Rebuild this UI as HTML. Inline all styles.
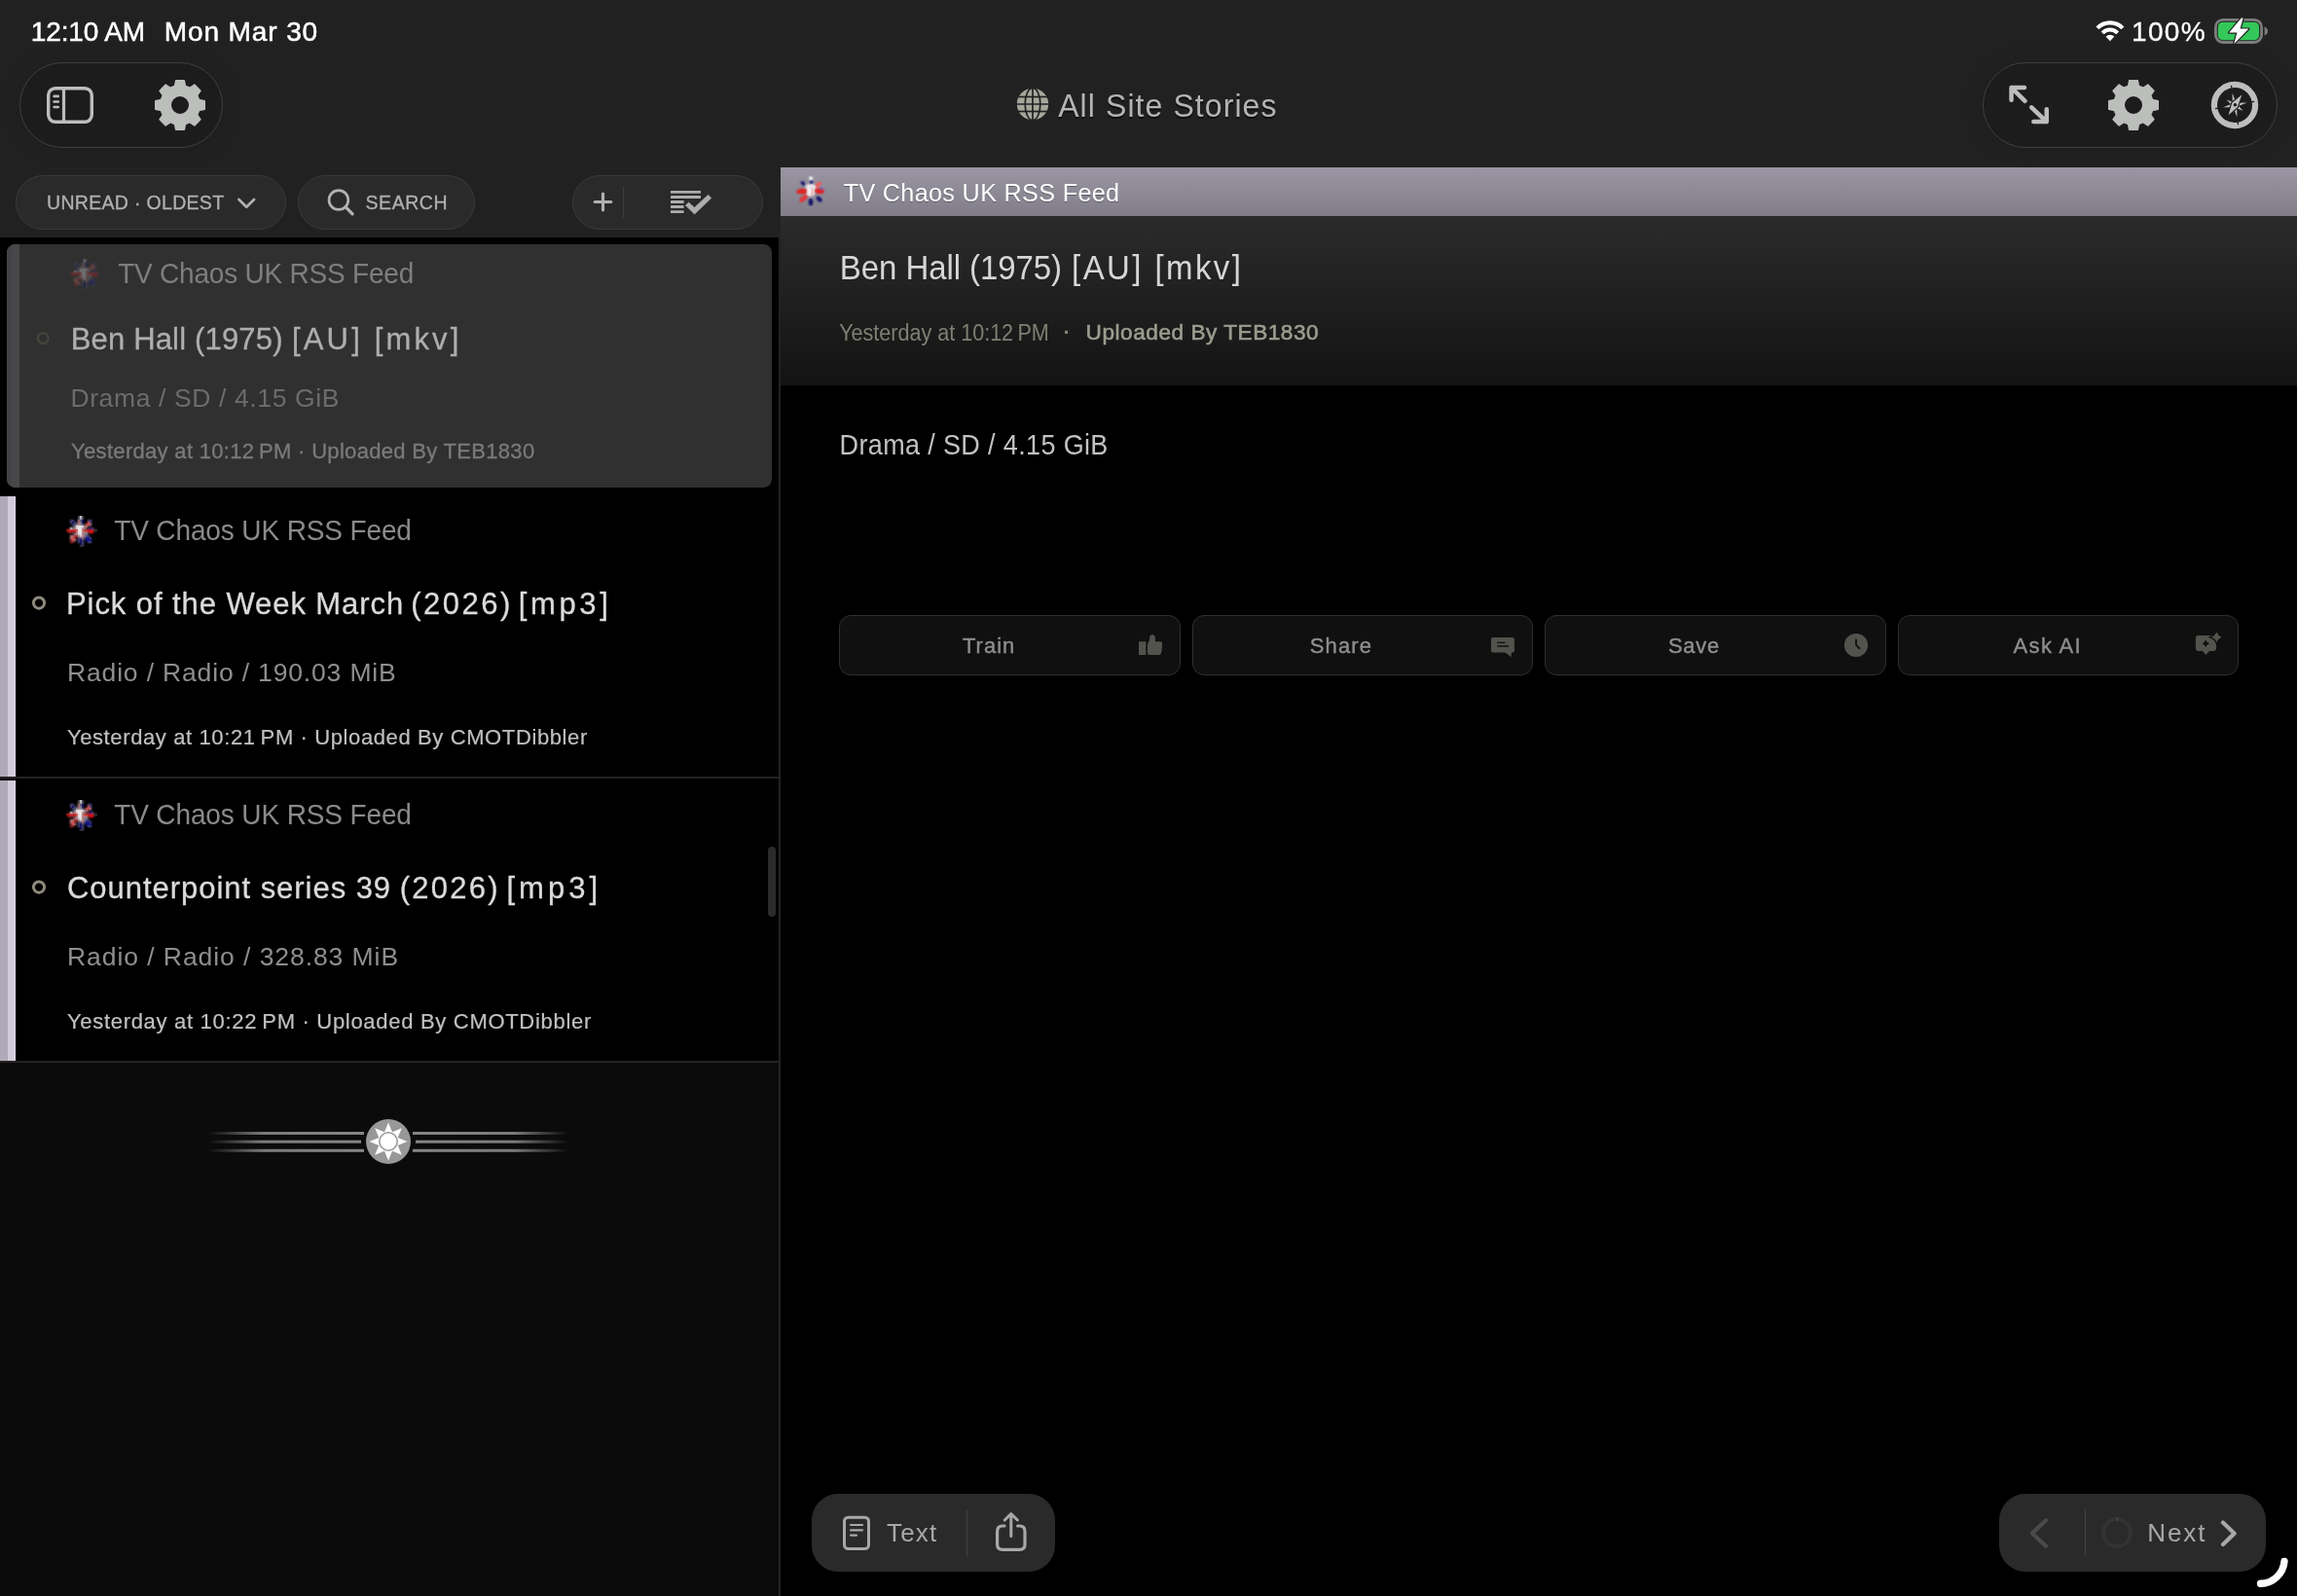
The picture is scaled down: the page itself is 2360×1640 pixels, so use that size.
<!DOCTYPE html>
<html lang="en"><head><meta charset="utf-8"><title>NewsBlur – All Site Stories</title>
<style>
*{box-sizing:border-box;margin:0;padding:0}
html,body{width:2360px;height:1640px;overflow:hidden;background:#000;font-family:"Liberation Sans",sans-serif;}
.abs,#app>div,#app>svg,#app>span,#txt>span{position:absolute}
#app{position:relative;width:2360px;height:1640px;overflow:hidden;background:#000}
#nav{left:0;top:0;width:2360px;height:172px;background:#212121}
#ltool{left:0;top:172px;width:800px;height:72px;background:#212121}
#list{left:0;top:244px;width:800px;height:847px;background:#000}
#lbot{left:0;top:1091px;width:800px;height:549px;background:#0b0b0b}
#vdiv{left:800px;top:172px;width:2px;height:1468px;background:#222222}
#feedbar{left:802px;top:172px;width:1558px;height:50px;background:linear-gradient(#9a96a3,#817e89)}
#ahead{left:802px;top:222px;width:1558px;height:174px;background:linear-gradient(#2b2b2b,#131313)}
.pill{border-radius:44px;background:#1c1c1c;border:1.5px solid #404040;box-shadow:0 0 14px 4px rgba(30,30,30,.6)}
.tpill{border-radius:28px;background:#2a2a2a;border:1.5px solid #3a3a3a}
.btn{top:632px;width:350.5px;height:62px;border-radius:12px;background:#101010;border:1.5px solid #2f2f2f}
.bpill{top:1535px;height:80px;border-radius:27px;background:#2a2a2a}
.sep{left:0;width:800px;height:2px;background:#232323}
.bar1{left:0;width:7.7px;background:#b0aab8}
.bar2{left:7.7px;width:8.4px;background:linear-gradient(90deg,#d0cad9 0,#d0cad9 86%,#dfd9e8 88%)}
</style></head><body><div id="app">
<div id="nav" role="banner" aria-label="Status and navigation bar"></div>
<div id="ltool" role="toolbar" aria-label="Story list toolbar"></div>
<div id="list" role="list" aria-label="Stories"></div>
<div id="lbot"></div>
<div id="vdiv"></div>
<div id="feedbar" role="heading" aria-label="Feed title bar"></div>
<div id="ahead" role="heading" aria-label="Story header"></div>

<!-- nav pills -->
<div class="pill" style="left:20px;top:64px;width:209px;height:88px"></div>
<div class="pill" style="left:2037px;top:64px;width:303px;height:88px"></div>


<!-- toolbar pills -->
<div class="tpill" style="left:16px;top:180px;width:278px;height:56px"></div>
<div class="tpill" style="left:306px;top:180px;width:182px;height:56px"></div>
<div class="tpill" style="left:588px;top:180px;width:196px;height:56px"></div>
<div style="left:640px;top:192px;width:1px;height:32px;background:#3d3d3d"></div>

<!-- selected card -->
<div style="left:7px;top:251px;width:786px;height:250px;border-radius:8.5px;background:#303030;overflow:hidden"><div style="position:absolute;left:0;top:0;width:12.9px;height:250px;background:linear-gradient(90deg,#434345 0,#434345 37%,#48484a 38%)"></div></div>

<!-- rows -->
<div class="bar1" style="top:510px;height:288px"></div><div class="bar2" style="top:510px;height:288px"></div>
<div class="sep" style="top:798px"></div>
<div class="bar1" style="top:802px;height:288px"></div><div class="bar2" style="top:802px;height:288px"></div>
<div class="sep" style="top:1090px"></div>
<div style="left:789px;top:870px;width:8px;height:72px;border-radius:4px;background:#2b2b2b"></div>

<!-- buttons -->
<div class="btn" role="button" aria-label="Train" style="left:862px;width:351px"></div>
<div class="btn" role="button" aria-label="Share" style="left:1225px;width:350px"></div>
<div class="btn" role="button" aria-label="Save" style="left:1587px;width:350.5px"></div>
<div class="btn" role="button" aria-label="Ask AI" style="left:1950px;width:350px"></div>

<!-- bottom pills -->
<div class="bpill" style="left:834px;width:250px"></div>
<div class="bpill" style="left:2054px;width:274px"></div>
<div style="left:993px;top:1551px;width:1px;height:48px;background:#424242"></div>
<div style="left:2142px;top:1551px;width:1px;height:48px;background:#424242"></div>

<svg style="left:46px;top:87px;" width="52" height="42" viewBox="0 0 52 42"><rect x="3.7" y="3.7" width="44.6" height="34.6" rx="7.2" fill="none" stroke="#bcbebc" stroke-width="3.4"/><line x1="19.5" y1="3.7" x2="19.5" y2="38.3" stroke="#bcbebc" stroke-width="3.2"/><g stroke="#bcbebc" stroke-width="2.6" stroke-linecap="round"><line x1="9.6" y1="11.9" x2="13.8" y2="11.9"/><line x1="9.6" y1="17.5" x2="13.8" y2="17.5"/><line x1="9.6" y1="23" x2="13.8" y2="23"/></g></svg>
<svg style="left:159px;top:82px;" width="52" height="52" viewBox="0 0 52 52"><path d="M20.60 6.54L21.70 0.80L30.30 0.80L31.40 6.54A20.2 20.2 0 0 1 35.95 8.42L40.78 5.14L46.86 11.22L43.58 16.05A20.2 20.2 0 0 1 45.46 20.60L51.20 21.70L51.20 30.30L45.46 31.40A20.2 20.2 0 0 1 43.58 35.95L46.86 40.78L40.78 46.86L35.95 43.58A20.2 20.2 0 0 1 31.40 45.46L30.30 51.20L21.70 51.20L20.60 45.46A20.2 20.2 0 0 1 16.05 43.58L11.22 46.86L5.14 40.78L8.42 35.95A20.2 20.2 0 0 1 6.54 31.40L0.80 30.30L0.80 21.70L6.54 20.60A20.2 20.2 0 0 1 8.42 16.05L5.14 11.22L11.22 5.14L16.05 8.42A20.2 20.2 0 0 1 20.60 6.54ZM35.80 26A9.8 9.8 0 1 0 16.20 26A9.8 9.8 0 1 0 35.80 26Z" fill="#bcbebc" stroke="#bcbebc" stroke-width="1.6" stroke-linejoin="round" fill-rule="evenodd"/></svg>
<svg style="left:2166px;top:82px;" width="52" height="52" viewBox="0 0 52 52"><path d="M20.60 6.54L21.70 0.80L30.30 0.80L31.40 6.54A20.2 20.2 0 0 1 35.95 8.42L40.78 5.14L46.86 11.22L43.58 16.05A20.2 20.2 0 0 1 45.46 20.60L51.20 21.70L51.20 30.30L45.46 31.40A20.2 20.2 0 0 1 43.58 35.95L46.86 40.78L40.78 46.86L35.95 43.58A20.2 20.2 0 0 1 31.40 45.46L30.30 51.20L21.70 51.20L20.60 45.46A20.2 20.2 0 0 1 16.05 43.58L11.22 46.86L5.14 40.78L8.42 35.95A20.2 20.2 0 0 1 6.54 31.40L0.80 30.30L0.80 21.70L6.54 20.60A20.2 20.2 0 0 1 8.42 16.05L5.14 11.22L11.22 5.14L16.05 8.42A20.2 20.2 0 0 1 20.60 6.54ZM35.80 26A9.8 9.8 0 1 0 16.20 26A9.8 9.8 0 1 0 35.80 26Z" fill="#bcbebc" stroke="#bcbebc" stroke-width="1.6" stroke-linejoin="round" fill-rule="evenodd"/></svg>
<svg style="left:2060px;top:84px;" width="50" height="48" viewBox="0 0 50 48"><g fill="none" stroke="#bcbebc" stroke-width="4.5" stroke-linecap="round" stroke-linejoin="round"><path d="M20.00 6.05L6.55 6.05L6.55 18.85M6.55 6.05L20.60 19.80"/><path d="M29.35 41.05L42.75 41.05L42.75 28.25M42.75 41.05L27.20 26.40"/></g></svg>
<svg style="left:2270px;top:82.4px;" width="52" height="52" viewBox="0 0 52 52"><circle cx="26" cy="26" r="21.1" fill="none" stroke="#bcbebc" stroke-width="6.2"/><line x1="22.46" y1="5.91" x2="22.98" y2="8.86" stroke="#1c1c1c" stroke-width="1.3"/><line x1="46.09" y1="22.46" x2="43.14" y2="22.98" stroke="#1c1c1c" stroke-width="1.3"/><line x1="29.54" y1="46.09" x2="29.02" y2="43.14" stroke="#1c1c1c" stroke-width="1.3"/><line x1="5.91" y1="29.54" x2="8.86" y2="29.02" stroke="#1c1c1c" stroke-width="1.3"/><path d="M23.56 13.44L28.26 25.56L23.74 26.44Z" fill="#bcbebc"/><path d="M38.66 23.54L26.44 28.26L25.56 23.74Z" fill="#bcbebc"/><path d="M34.54 31.76L24.71 27.91L27.29 24.09Z" fill="#bcbebc"/><path d="M28.39 38.27L23.74 26.44L28.26 25.56Z" fill="#bcbebc"/><path d="M14.22 28.29L25.56 23.74L26.44 28.26Z" fill="#bcbebc"/><path d="M17.71 20.41L27.29 24.09L24.71 27.91Z" fill="#bcbebc"/><path d="M34.6 13.6L29.2 28.6L18.4 37.9L22.8 23.4Z" fill="#bcbebc" stroke="#1c1c1c" stroke-width="1.2"/><circle cx="26.4" cy="25.7" r="1.8" fill="#1c1c1c"/></svg>
<svg style="left:1043px;top:89px;" width="36" height="36" viewBox="0 0 36 36"><circle cx="18" cy="18" r="16.2" fill="#a6a69b"/><g fill="none" stroke="#212121" stroke-width="1.7"><line x1="18" y1="1" x2="18" y2="35"/><line x1="1" y1="18" x2="35" y2="18"/><line x1="2" y1="10.5" x2="34" y2="10.5"/><line x1="2" y1="25.5" x2="34" y2="25.5"/><ellipse cx="18" cy="18" rx="7.8" ry="16.6"/></g></svg>
<svg style="left:240px;top:198px;" width="28" height="22" viewBox="0 0 28 22"><path d="M5.5 7L13.25 14.7L21 7" fill="none" stroke="#b2b2b2" stroke-width="2.7" stroke-linecap="round" stroke-linejoin="round"/></svg>
<svg style="left:332px;top:190px;" width="36" height="36" viewBox="0 0 36 36"><circle cx="15.9" cy="15.45" r="9.9" fill="none" stroke="#b2b2b2" stroke-width="2.7"/><line x1="23.3" y1="22.9" x2="30.1" y2="29.8" stroke="#b2b2b2" stroke-width="3.3" stroke-linecap="round"/></svg>
<svg style="left:606px;top:194px;" width="28" height="28" viewBox="0 0 28 28"><path d="M13.5 5.2V21.8M5.2 13.5H21.8" stroke="#b2b2b2" stroke-width="3.2" stroke-linecap="round" fill="none"/></svg>
<svg style="left:686px;top:193px;" width="50" height="32" viewBox="0 0 50 32"><rect x="3" y="2.90" width="31.0" height="2.90" rx="0.4" fill="#adadad"/><rect x="3" y="8.00" width="31.0" height="2.90" rx="0.4" fill="#adadad"/><rect x="3" y="13.00" width="13.6" height="2.90" rx="0.4" fill="#adadad"/><rect x="3" y="18.10" width="13.6" height="2.90" rx="0.4" fill="#adadad"/><rect x="3" y="23.20" width="13.6" height="2.90" rx="0.4" fill="#adadad"/><polygon points="18.30,18.00 21.60,15.10 27.50,20.30 41.60,7.20 44.80,10.60 27.60,27.10" fill="#adadad" stroke="#adadad" stroke-width="0.6" stroke-linejoin="round"/></svg>
<svg style="left:35px;top:339px;" width="18" height="18" viewBox="0 0 18 18"><circle cx="9.35" cy="8.7" r="5.3" fill="none" stroke="#45453f" stroke-width="2.4"/></svg>
<svg style="left:31px;top:611px;" width="18" height="18" viewBox="0 0 18 18"><circle cx="9" cy="8.6" r="5.6" fill="none" stroke="#8f8b7f" stroke-width="2.9"/></svg>
<svg style="left:31px;top:903px;" width="18" height="18" viewBox="0 0 18 18"><circle cx="9" cy="8.6" r="5.6" fill="none" stroke="#8f8b7f" stroke-width="2.9"/></svg>
<svg style="left:72px;top:265.5px;opacity:0.3" width="32" height="32" viewBox="0 0 32 32"><filter id="fb1" x="-10%" y="-10%" width="120%" height="120%"><feGaussianBlur stdDeviation="0.8"/></filter><g filter="url(#fb1)"><rect x="12" y="0" width="2.05" height="2.05" fill="#404048"/><rect x="14" y="0" width="2.05" height="2.05" fill="#ffffff"/><rect x="16" y="0" width="2.05" height="2.05" fill="#404048"/><rect x="12" y="2" width="2.05" height="2.05" fill="#404048"/><rect x="14" y="2" width="2.05" height="2.05" fill="#c8c8e0"/><rect x="16" y="2" width="2.05" height="2.05" fill="#404048"/><rect x="4" y="4" width="2.05" height="2.05" fill="#484880"/><rect x="6" y="4" width="2.05" height="2.05" fill="#484880"/><rect x="12" y="4" width="2.05" height="2.05" fill="#c08080"/><rect x="14" y="4" width="2.05" height="2.05" fill="#484880"/><rect x="16" y="4" width="2.05" height="2.05" fill="#000068"/><rect x="22" y="4" width="2.05" height="2.05" fill="#484880"/><rect x="24" y="4" width="2.05" height="2.05" fill="#484880"/><rect x="4" y="6" width="2.05" height="2.05" fill="#484880"/><rect x="6" y="6" width="2.05" height="2.05" fill="#000068"/><rect x="8" y="6" width="2.05" height="2.05" fill="#484880"/><rect x="12" y="6" width="2.05" height="2.05" fill="#c08080"/><rect x="14" y="6" width="2.05" height="2.05" fill="#888898"/><rect x="16" y="6" width="2.05" height="2.05" fill="#000068"/><rect x="22" y="6" width="2.05" height="2.05" fill="#f05858"/><rect x="24" y="6" width="2.05" height="2.05" fill="#484880"/><rect x="6" y="8" width="2.05" height="2.05" fill="#484880"/><rect x="8" y="8" width="2.05" height="2.05" fill="#484880"/><rect x="10" y="8" width="2.05" height="2.05" fill="#888898"/><rect x="12" y="8" width="2.05" height="2.05" fill="#c08080"/><rect x="14" y="8" width="2.05" height="2.05" fill="#888898"/><rect x="16" y="8" width="2.05" height="2.05" fill="#484880"/><rect x="20" y="8" width="2.05" height="2.05" fill="#f05858"/><rect x="22" y="8" width="2.05" height="2.05" fill="#f05858"/><rect x="24" y="8" width="2.05" height="2.05" fill="#c08080"/><rect x="8" y="10" width="2.05" height="2.05" fill="#888898"/><rect x="10" y="10" width="2.05" height="2.05" fill="#ffffff"/><rect x="12" y="10" width="2.05" height="2.05" fill="#ffffff"/><rect x="14" y="10" width="2.05" height="2.05" fill="#ffffff"/><rect x="16" y="10" width="2.05" height="2.05" fill="#ffffff"/><rect x="18" y="10" width="2.05" height="2.05" fill="#c08080"/><rect x="20" y="10" width="2.05" height="2.05" fill="#c08080"/><rect x="22" y="10" width="2.05" height="2.05" fill="#404048"/><rect x="4" y="12" width="2.05" height="2.05" fill="#e8e0e8"/><rect x="6" y="12" width="2.05" height="2.05" fill="#888898"/><rect x="8" y="12" width="2.05" height="2.05" fill="#c08080"/><rect x="10" y="12" width="2.05" height="2.05" fill="#e8e0e8"/><rect x="12" y="12" width="2.05" height="2.05" fill="#ffffff"/><rect x="14" y="12" width="2.05" height="2.05" fill="#ffffff"/><rect x="16" y="12" width="2.05" height="2.05" fill="#c08080"/><rect x="18" y="12" width="2.05" height="2.05" fill="#888898"/><rect x="20" y="12" width="2.05" height="2.05" fill="#404048"/><rect x="24" y="12" width="2.05" height="2.05" fill="#1010a0"/><rect x="26" y="12" width="2.05" height="2.05" fill="#484880"/><rect x="0" y="14" width="2.05" height="2.05" fill="#e81818"/><rect x="2" y="14" width="2.05" height="2.05" fill="#e81818"/><rect x="4" y="14" width="2.05" height="2.05" fill="#e81818"/><rect x="6" y="14" width="2.05" height="2.05" fill="#e81818"/><rect x="8" y="14" width="2.05" height="2.05" fill="#e81818"/><rect x="10" y="14" width="2.05" height="2.05" fill="#e81818"/><rect x="12" y="14" width="2.05" height="2.05" fill="#ffffff"/><rect x="14" y="14" width="2.05" height="2.05" fill="#ffffff"/><rect x="16" y="14" width="2.05" height="2.05" fill="#c08080"/><rect x="18" y="14" width="2.05" height="2.05" fill="#e81818"/><rect x="20" y="14" width="2.05" height="2.05" fill="#e81818"/><rect x="22" y="14" width="2.05" height="2.05" fill="#e81818"/><rect x="24" y="14" width="2.05" height="2.05" fill="#e81818"/><rect x="26" y="14" width="2.05" height="2.05" fill="#e81818"/><rect x="28" y="14" width="2.05" height="2.05" fill="#404048"/><rect x="30" y="14" width="2.05" height="2.05" fill="#404048"/><rect x="2" y="16" width="2.05" height="2.05" fill="#902828"/><rect x="4" y="16" width="2.05" height="2.05" fill="#902828"/><rect x="6" y="16" width="2.05" height="2.05" fill="#902828"/><rect x="8" y="16" width="2.05" height="2.05" fill="#902828"/><rect x="10" y="16" width="2.05" height="2.05" fill="#c08080"/><rect x="12" y="16" width="2.05" height="2.05" fill="#ffffff"/><rect x="14" y="16" width="2.05" height="2.05" fill="#ffffff"/><rect x="16" y="16" width="2.05" height="2.05" fill="#c08080"/><rect x="18" y="16" width="2.05" height="2.05" fill="#c08080"/><rect x="20" y="16" width="2.05" height="2.05" fill="#c08080"/><rect x="22" y="16" width="2.05" height="2.05" fill="#902828"/><rect x="24" y="16" width="2.05" height="2.05" fill="#e81818"/><rect x="26" y="16" width="2.05" height="2.05" fill="#e81818"/><rect x="8" y="18" width="2.05" height="2.05" fill="#888898"/><rect x="10" y="18" width="2.05" height="2.05" fill="#c08080"/><rect x="12" y="18" width="2.05" height="2.05" fill="#e8e0e8"/><rect x="14" y="18" width="2.05" height="2.05" fill="#ffffff"/><rect x="16" y="18" width="2.05" height="2.05" fill="#c08080"/><rect x="18" y="18" width="2.05" height="2.05" fill="#888898"/><rect x="20" y="18" width="2.05" height="2.05" fill="#888898"/><rect x="4" y="20" width="2.05" height="2.05" fill="#c08080"/><rect x="6" y="20" width="2.05" height="2.05" fill="#c08080"/><rect x="8" y="20" width="2.05" height="2.05" fill="#e81818"/><rect x="10" y="20" width="2.05" height="2.05" fill="#902828"/><rect x="12" y="20" width="2.05" height="2.05" fill="#c08080"/><rect x="14" y="20" width="2.05" height="2.05" fill="#e8e0e8"/><rect x="16" y="20" width="2.05" height="2.05" fill="#c08080"/><rect x="18" y="20" width="2.05" height="2.05" fill="#888898"/><rect x="20" y="20" width="2.05" height="2.05" fill="#484880"/><rect x="22" y="20" width="2.05" height="2.05" fill="#484880"/><rect x="4" y="22" width="2.05" height="2.05" fill="#c08080"/><rect x="6" y="22" width="2.05" height="2.05" fill="#f05858"/><rect x="8" y="22" width="2.05" height="2.05" fill="#902828"/><rect x="12" y="22" width="2.05" height="2.05" fill="#484880"/><rect x="14" y="22" width="2.05" height="2.05" fill="#484880"/><rect x="16" y="22" width="2.05" height="2.05" fill="#c08080"/><rect x="18" y="22" width="2.05" height="2.05" fill="#484880"/><rect x="20" y="22" width="2.05" height="2.05" fill="#1010a0"/><rect x="22" y="22" width="2.05" height="2.05" fill="#1010a0"/><rect x="24" y="22" width="2.05" height="2.05" fill="#484880"/><rect x="4" y="24" width="2.05" height="2.05" fill="#902828"/><rect x="6" y="24" width="2.05" height="2.05" fill="#f05858"/><rect x="8" y="24" width="2.05" height="2.05" fill="#c08080"/><rect x="12" y="24" width="2.05" height="2.05" fill="#484880"/><rect x="14" y="24" width="2.05" height="2.05" fill="#000068"/><rect x="16" y="24" width="2.05" height="2.05" fill="#484880"/><rect x="20" y="24" width="2.05" height="2.05" fill="#1010a0"/><rect x="22" y="24" width="2.05" height="2.05" fill="#1010a0"/><rect x="24" y="24" width="2.05" height="2.05" fill="#1010a0"/><rect x="4" y="26" width="2.05" height="2.05" fill="#902828"/><rect x="6" y="26" width="2.05" height="2.05" fill="#902828"/><rect x="12" y="26" width="2.05" height="2.05" fill="#484880"/><rect x="14" y="26" width="2.05" height="2.05" fill="#000068"/><rect x="16" y="26" width="2.05" height="2.05" fill="#484880"/><rect x="22" y="26" width="2.05" height="2.05" fill="#484880"/><rect x="24" y="26" width="2.05" height="2.05" fill="#484880"/><rect x="14" y="28" width="2.05" height="2.05" fill="#000068"/><rect x="16" y="28" width="2.05" height="2.05" fill="#484880"/><rect x="14" y="30" width="2.05" height="2.05" fill="#404048"/><rect x="16" y="30" width="2.05" height="2.05" fill="#404048"/></g><g opacity="0.45"><rect x="12" y="0" width="2.05" height="2.05" fill="#404048"/><rect x="14" y="0" width="2.05" height="2.05" fill="#ffffff"/><rect x="16" y="0" width="2.05" height="2.05" fill="#404048"/><rect x="12" y="2" width="2.05" height="2.05" fill="#404048"/><rect x="14" y="2" width="2.05" height="2.05" fill="#c8c8e0"/><rect x="16" y="2" width="2.05" height="2.05" fill="#404048"/><rect x="4" y="4" width="2.05" height="2.05" fill="#484880"/><rect x="6" y="4" width="2.05" height="2.05" fill="#484880"/><rect x="12" y="4" width="2.05" height="2.05" fill="#c08080"/><rect x="14" y="4" width="2.05" height="2.05" fill="#484880"/><rect x="16" y="4" width="2.05" height="2.05" fill="#000068"/><rect x="22" y="4" width="2.05" height="2.05" fill="#484880"/><rect x="24" y="4" width="2.05" height="2.05" fill="#484880"/><rect x="4" y="6" width="2.05" height="2.05" fill="#484880"/><rect x="6" y="6" width="2.05" height="2.05" fill="#000068"/><rect x="8" y="6" width="2.05" height="2.05" fill="#484880"/><rect x="12" y="6" width="2.05" height="2.05" fill="#c08080"/><rect x="14" y="6" width="2.05" height="2.05" fill="#888898"/><rect x="16" y="6" width="2.05" height="2.05" fill="#000068"/><rect x="22" y="6" width="2.05" height="2.05" fill="#f05858"/><rect x="24" y="6" width="2.05" height="2.05" fill="#484880"/><rect x="6" y="8" width="2.05" height="2.05" fill="#484880"/><rect x="8" y="8" width="2.05" height="2.05" fill="#484880"/><rect x="10" y="8" width="2.05" height="2.05" fill="#888898"/><rect x="12" y="8" width="2.05" height="2.05" fill="#c08080"/><rect x="14" y="8" width="2.05" height="2.05" fill="#888898"/><rect x="16" y="8" width="2.05" height="2.05" fill="#484880"/><rect x="20" y="8" width="2.05" height="2.05" fill="#f05858"/><rect x="22" y="8" width="2.05" height="2.05" fill="#f05858"/><rect x="24" y="8" width="2.05" height="2.05" fill="#c08080"/><rect x="8" y="10" width="2.05" height="2.05" fill="#888898"/><rect x="10" y="10" width="2.05" height="2.05" fill="#ffffff"/><rect x="12" y="10" width="2.05" height="2.05" fill="#ffffff"/><rect x="14" y="10" width="2.05" height="2.05" fill="#ffffff"/><rect x="16" y="10" width="2.05" height="2.05" fill="#ffffff"/><rect x="18" y="10" width="2.05" height="2.05" fill="#c08080"/><rect x="20" y="10" width="2.05" height="2.05" fill="#c08080"/><rect x="22" y="10" width="2.05" height="2.05" fill="#404048"/><rect x="4" y="12" width="2.05" height="2.05" fill="#e8e0e8"/><rect x="6" y="12" width="2.05" height="2.05" fill="#888898"/><rect x="8" y="12" width="2.05" height="2.05" fill="#c08080"/><rect x="10" y="12" width="2.05" height="2.05" fill="#e8e0e8"/><rect x="12" y="12" width="2.05" height="2.05" fill="#ffffff"/><rect x="14" y="12" width="2.05" height="2.05" fill="#ffffff"/><rect x="16" y="12" width="2.05" height="2.05" fill="#c08080"/><rect x="18" y="12" width="2.05" height="2.05" fill="#888898"/><rect x="20" y="12" width="2.05" height="2.05" fill="#404048"/><rect x="24" y="12" width="2.05" height="2.05" fill="#1010a0"/><rect x="26" y="12" width="2.05" height="2.05" fill="#484880"/><rect x="0" y="14" width="2.05" height="2.05" fill="#e81818"/><rect x="2" y="14" width="2.05" height="2.05" fill="#e81818"/><rect x="4" y="14" width="2.05" height="2.05" fill="#e81818"/><rect x="6" y="14" width="2.05" height="2.05" fill="#e81818"/><rect x="8" y="14" width="2.05" height="2.05" fill="#e81818"/><rect x="10" y="14" width="2.05" height="2.05" fill="#e81818"/><rect x="12" y="14" width="2.05" height="2.05" fill="#ffffff"/><rect x="14" y="14" width="2.05" height="2.05" fill="#ffffff"/><rect x="16" y="14" width="2.05" height="2.05" fill="#c08080"/><rect x="18" y="14" width="2.05" height="2.05" fill="#e81818"/><rect x="20" y="14" width="2.05" height="2.05" fill="#e81818"/><rect x="22" y="14" width="2.05" height="2.05" fill="#e81818"/><rect x="24" y="14" width="2.05" height="2.05" fill="#e81818"/><rect x="26" y="14" width="2.05" height="2.05" fill="#e81818"/><rect x="28" y="14" width="2.05" height="2.05" fill="#404048"/><rect x="30" y="14" width="2.05" height="2.05" fill="#404048"/><rect x="2" y="16" width="2.05" height="2.05" fill="#902828"/><rect x="4" y="16" width="2.05" height="2.05" fill="#902828"/><rect x="6" y="16" width="2.05" height="2.05" fill="#902828"/><rect x="8" y="16" width="2.05" height="2.05" fill="#902828"/><rect x="10" y="16" width="2.05" height="2.05" fill="#c08080"/><rect x="12" y="16" width="2.05" height="2.05" fill="#ffffff"/><rect x="14" y="16" width="2.05" height="2.05" fill="#ffffff"/><rect x="16" y="16" width="2.05" height="2.05" fill="#c08080"/><rect x="18" y="16" width="2.05" height="2.05" fill="#c08080"/><rect x="20" y="16" width="2.05" height="2.05" fill="#c08080"/><rect x="22" y="16" width="2.05" height="2.05" fill="#902828"/><rect x="24" y="16" width="2.05" height="2.05" fill="#e81818"/><rect x="26" y="16" width="2.05" height="2.05" fill="#e81818"/><rect x="8" y="18" width="2.05" height="2.05" fill="#888898"/><rect x="10" y="18" width="2.05" height="2.05" fill="#c08080"/><rect x="12" y="18" width="2.05" height="2.05" fill="#e8e0e8"/><rect x="14" y="18" width="2.05" height="2.05" fill="#ffffff"/><rect x="16" y="18" width="2.05" height="2.05" fill="#c08080"/><rect x="18" y="18" width="2.05" height="2.05" fill="#888898"/><rect x="20" y="18" width="2.05" height="2.05" fill="#888898"/><rect x="4" y="20" width="2.05" height="2.05" fill="#c08080"/><rect x="6" y="20" width="2.05" height="2.05" fill="#c08080"/><rect x="8" y="20" width="2.05" height="2.05" fill="#e81818"/><rect x="10" y="20" width="2.05" height="2.05" fill="#902828"/><rect x="12" y="20" width="2.05" height="2.05" fill="#c08080"/><rect x="14" y="20" width="2.05" height="2.05" fill="#e8e0e8"/><rect x="16" y="20" width="2.05" height="2.05" fill="#c08080"/><rect x="18" y="20" width="2.05" height="2.05" fill="#888898"/><rect x="20" y="20" width="2.05" height="2.05" fill="#484880"/><rect x="22" y="20" width="2.05" height="2.05" fill="#484880"/><rect x="4" y="22" width="2.05" height="2.05" fill="#c08080"/><rect x="6" y="22" width="2.05" height="2.05" fill="#f05858"/><rect x="8" y="22" width="2.05" height="2.05" fill="#902828"/><rect x="12" y="22" width="2.05" height="2.05" fill="#484880"/><rect x="14" y="22" width="2.05" height="2.05" fill="#484880"/><rect x="16" y="22" width="2.05" height="2.05" fill="#c08080"/><rect x="18" y="22" width="2.05" height="2.05" fill="#484880"/><rect x="20" y="22" width="2.05" height="2.05" fill="#1010a0"/><rect x="22" y="22" width="2.05" height="2.05" fill="#1010a0"/><rect x="24" y="22" width="2.05" height="2.05" fill="#484880"/><rect x="4" y="24" width="2.05" height="2.05" fill="#902828"/><rect x="6" y="24" width="2.05" height="2.05" fill="#f05858"/><rect x="8" y="24" width="2.05" height="2.05" fill="#c08080"/><rect x="12" y="24" width="2.05" height="2.05" fill="#484880"/><rect x="14" y="24" width="2.05" height="2.05" fill="#000068"/><rect x="16" y="24" width="2.05" height="2.05" fill="#484880"/><rect x="20" y="24" width="2.05" height="2.05" fill="#1010a0"/><rect x="22" y="24" width="2.05" height="2.05" fill="#1010a0"/><rect x="24" y="24" width="2.05" height="2.05" fill="#1010a0"/><rect x="4" y="26" width="2.05" height="2.05" fill="#902828"/><rect x="6" y="26" width="2.05" height="2.05" fill="#902828"/><rect x="12" y="26" width="2.05" height="2.05" fill="#484880"/><rect x="14" y="26" width="2.05" height="2.05" fill="#000068"/><rect x="16" y="26" width="2.05" height="2.05" fill="#484880"/><rect x="22" y="26" width="2.05" height="2.05" fill="#484880"/><rect x="24" y="26" width="2.05" height="2.05" fill="#484880"/><rect x="14" y="28" width="2.05" height="2.05" fill="#000068"/><rect x="16" y="28" width="2.05" height="2.05" fill="#484880"/><rect x="14" y="30" width="2.05" height="2.05" fill="#404048"/><rect x="16" y="30" width="2.05" height="2.05" fill="#404048"/></g></svg>
<svg style="left:68px;top:529.5px;opacity:0.92" width="32" height="32" viewBox="0 0 32 32"><filter id="fb2" x="-10%" y="-10%" width="120%" height="120%"><feGaussianBlur stdDeviation="0.8"/></filter><g filter="url(#fb2)"><rect x="12" y="0" width="2.05" height="2.05" fill="#404048"/><rect x="14" y="0" width="2.05" height="2.05" fill="#ffffff"/><rect x="16" y="0" width="2.05" height="2.05" fill="#404048"/><rect x="12" y="2" width="2.05" height="2.05" fill="#404048"/><rect x="14" y="2" width="2.05" height="2.05" fill="#c8c8e0"/><rect x="16" y="2" width="2.05" height="2.05" fill="#404048"/><rect x="4" y="4" width="2.05" height="2.05" fill="#484880"/><rect x="6" y="4" width="2.05" height="2.05" fill="#484880"/><rect x="12" y="4" width="2.05" height="2.05" fill="#c08080"/><rect x="14" y="4" width="2.05" height="2.05" fill="#484880"/><rect x="16" y="4" width="2.05" height="2.05" fill="#000068"/><rect x="22" y="4" width="2.05" height="2.05" fill="#484880"/><rect x="24" y="4" width="2.05" height="2.05" fill="#484880"/><rect x="4" y="6" width="2.05" height="2.05" fill="#484880"/><rect x="6" y="6" width="2.05" height="2.05" fill="#000068"/><rect x="8" y="6" width="2.05" height="2.05" fill="#484880"/><rect x="12" y="6" width="2.05" height="2.05" fill="#c08080"/><rect x="14" y="6" width="2.05" height="2.05" fill="#888898"/><rect x="16" y="6" width="2.05" height="2.05" fill="#000068"/><rect x="22" y="6" width="2.05" height="2.05" fill="#f05858"/><rect x="24" y="6" width="2.05" height="2.05" fill="#484880"/><rect x="6" y="8" width="2.05" height="2.05" fill="#484880"/><rect x="8" y="8" width="2.05" height="2.05" fill="#484880"/><rect x="10" y="8" width="2.05" height="2.05" fill="#888898"/><rect x="12" y="8" width="2.05" height="2.05" fill="#c08080"/><rect x="14" y="8" width="2.05" height="2.05" fill="#888898"/><rect x="16" y="8" width="2.05" height="2.05" fill="#484880"/><rect x="20" y="8" width="2.05" height="2.05" fill="#f05858"/><rect x="22" y="8" width="2.05" height="2.05" fill="#f05858"/><rect x="24" y="8" width="2.05" height="2.05" fill="#c08080"/><rect x="8" y="10" width="2.05" height="2.05" fill="#888898"/><rect x="10" y="10" width="2.05" height="2.05" fill="#ffffff"/><rect x="12" y="10" width="2.05" height="2.05" fill="#ffffff"/><rect x="14" y="10" width="2.05" height="2.05" fill="#ffffff"/><rect x="16" y="10" width="2.05" height="2.05" fill="#ffffff"/><rect x="18" y="10" width="2.05" height="2.05" fill="#c08080"/><rect x="20" y="10" width="2.05" height="2.05" fill="#c08080"/><rect x="22" y="10" width="2.05" height="2.05" fill="#404048"/><rect x="4" y="12" width="2.05" height="2.05" fill="#e8e0e8"/><rect x="6" y="12" width="2.05" height="2.05" fill="#888898"/><rect x="8" y="12" width="2.05" height="2.05" fill="#c08080"/><rect x="10" y="12" width="2.05" height="2.05" fill="#e8e0e8"/><rect x="12" y="12" width="2.05" height="2.05" fill="#ffffff"/><rect x="14" y="12" width="2.05" height="2.05" fill="#ffffff"/><rect x="16" y="12" width="2.05" height="2.05" fill="#c08080"/><rect x="18" y="12" width="2.05" height="2.05" fill="#888898"/><rect x="20" y="12" width="2.05" height="2.05" fill="#404048"/><rect x="24" y="12" width="2.05" height="2.05" fill="#1010a0"/><rect x="26" y="12" width="2.05" height="2.05" fill="#484880"/><rect x="0" y="14" width="2.05" height="2.05" fill="#e81818"/><rect x="2" y="14" width="2.05" height="2.05" fill="#e81818"/><rect x="4" y="14" width="2.05" height="2.05" fill="#e81818"/><rect x="6" y="14" width="2.05" height="2.05" fill="#e81818"/><rect x="8" y="14" width="2.05" height="2.05" fill="#e81818"/><rect x="10" y="14" width="2.05" height="2.05" fill="#e81818"/><rect x="12" y="14" width="2.05" height="2.05" fill="#ffffff"/><rect x="14" y="14" width="2.05" height="2.05" fill="#ffffff"/><rect x="16" y="14" width="2.05" height="2.05" fill="#c08080"/><rect x="18" y="14" width="2.05" height="2.05" fill="#e81818"/><rect x="20" y="14" width="2.05" height="2.05" fill="#e81818"/><rect x="22" y="14" width="2.05" height="2.05" fill="#e81818"/><rect x="24" y="14" width="2.05" height="2.05" fill="#e81818"/><rect x="26" y="14" width="2.05" height="2.05" fill="#e81818"/><rect x="28" y="14" width="2.05" height="2.05" fill="#404048"/><rect x="30" y="14" width="2.05" height="2.05" fill="#404048"/><rect x="2" y="16" width="2.05" height="2.05" fill="#902828"/><rect x="4" y="16" width="2.05" height="2.05" fill="#902828"/><rect x="6" y="16" width="2.05" height="2.05" fill="#902828"/><rect x="8" y="16" width="2.05" height="2.05" fill="#902828"/><rect x="10" y="16" width="2.05" height="2.05" fill="#c08080"/><rect x="12" y="16" width="2.05" height="2.05" fill="#ffffff"/><rect x="14" y="16" width="2.05" height="2.05" fill="#ffffff"/><rect x="16" y="16" width="2.05" height="2.05" fill="#c08080"/><rect x="18" y="16" width="2.05" height="2.05" fill="#c08080"/><rect x="20" y="16" width="2.05" height="2.05" fill="#c08080"/><rect x="22" y="16" width="2.05" height="2.05" fill="#902828"/><rect x="24" y="16" width="2.05" height="2.05" fill="#e81818"/><rect x="26" y="16" width="2.05" height="2.05" fill="#e81818"/><rect x="8" y="18" width="2.05" height="2.05" fill="#888898"/><rect x="10" y="18" width="2.05" height="2.05" fill="#c08080"/><rect x="12" y="18" width="2.05" height="2.05" fill="#e8e0e8"/><rect x="14" y="18" width="2.05" height="2.05" fill="#ffffff"/><rect x="16" y="18" width="2.05" height="2.05" fill="#c08080"/><rect x="18" y="18" width="2.05" height="2.05" fill="#888898"/><rect x="20" y="18" width="2.05" height="2.05" fill="#888898"/><rect x="4" y="20" width="2.05" height="2.05" fill="#c08080"/><rect x="6" y="20" width="2.05" height="2.05" fill="#c08080"/><rect x="8" y="20" width="2.05" height="2.05" fill="#e81818"/><rect x="10" y="20" width="2.05" height="2.05" fill="#902828"/><rect x="12" y="20" width="2.05" height="2.05" fill="#c08080"/><rect x="14" y="20" width="2.05" height="2.05" fill="#e8e0e8"/><rect x="16" y="20" width="2.05" height="2.05" fill="#c08080"/><rect x="18" y="20" width="2.05" height="2.05" fill="#888898"/><rect x="20" y="20" width="2.05" height="2.05" fill="#484880"/><rect x="22" y="20" width="2.05" height="2.05" fill="#484880"/><rect x="4" y="22" width="2.05" height="2.05" fill="#c08080"/><rect x="6" y="22" width="2.05" height="2.05" fill="#f05858"/><rect x="8" y="22" width="2.05" height="2.05" fill="#902828"/><rect x="12" y="22" width="2.05" height="2.05" fill="#484880"/><rect x="14" y="22" width="2.05" height="2.05" fill="#484880"/><rect x="16" y="22" width="2.05" height="2.05" fill="#c08080"/><rect x="18" y="22" width="2.05" height="2.05" fill="#484880"/><rect x="20" y="22" width="2.05" height="2.05" fill="#1010a0"/><rect x="22" y="22" width="2.05" height="2.05" fill="#1010a0"/><rect x="24" y="22" width="2.05" height="2.05" fill="#484880"/><rect x="4" y="24" width="2.05" height="2.05" fill="#902828"/><rect x="6" y="24" width="2.05" height="2.05" fill="#f05858"/><rect x="8" y="24" width="2.05" height="2.05" fill="#c08080"/><rect x="12" y="24" width="2.05" height="2.05" fill="#484880"/><rect x="14" y="24" width="2.05" height="2.05" fill="#000068"/><rect x="16" y="24" width="2.05" height="2.05" fill="#484880"/><rect x="20" y="24" width="2.05" height="2.05" fill="#1010a0"/><rect x="22" y="24" width="2.05" height="2.05" fill="#1010a0"/><rect x="24" y="24" width="2.05" height="2.05" fill="#1010a0"/><rect x="4" y="26" width="2.05" height="2.05" fill="#902828"/><rect x="6" y="26" width="2.05" height="2.05" fill="#902828"/><rect x="12" y="26" width="2.05" height="2.05" fill="#484880"/><rect x="14" y="26" width="2.05" height="2.05" fill="#000068"/><rect x="16" y="26" width="2.05" height="2.05" fill="#484880"/><rect x="22" y="26" width="2.05" height="2.05" fill="#484880"/><rect x="24" y="26" width="2.05" height="2.05" fill="#484880"/><rect x="14" y="28" width="2.05" height="2.05" fill="#000068"/><rect x="16" y="28" width="2.05" height="2.05" fill="#484880"/><rect x="14" y="30" width="2.05" height="2.05" fill="#404048"/><rect x="16" y="30" width="2.05" height="2.05" fill="#404048"/></g><g opacity="0.45"><rect x="12" y="0" width="2.05" height="2.05" fill="#404048"/><rect x="14" y="0" width="2.05" height="2.05" fill="#ffffff"/><rect x="16" y="0" width="2.05" height="2.05" fill="#404048"/><rect x="12" y="2" width="2.05" height="2.05" fill="#404048"/><rect x="14" y="2" width="2.05" height="2.05" fill="#c8c8e0"/><rect x="16" y="2" width="2.05" height="2.05" fill="#404048"/><rect x="4" y="4" width="2.05" height="2.05" fill="#484880"/><rect x="6" y="4" width="2.05" height="2.05" fill="#484880"/><rect x="12" y="4" width="2.05" height="2.05" fill="#c08080"/><rect x="14" y="4" width="2.05" height="2.05" fill="#484880"/><rect x="16" y="4" width="2.05" height="2.05" fill="#000068"/><rect x="22" y="4" width="2.05" height="2.05" fill="#484880"/><rect x="24" y="4" width="2.05" height="2.05" fill="#484880"/><rect x="4" y="6" width="2.05" height="2.05" fill="#484880"/><rect x="6" y="6" width="2.05" height="2.05" fill="#000068"/><rect x="8" y="6" width="2.05" height="2.05" fill="#484880"/><rect x="12" y="6" width="2.05" height="2.05" fill="#c08080"/><rect x="14" y="6" width="2.05" height="2.05" fill="#888898"/><rect x="16" y="6" width="2.05" height="2.05" fill="#000068"/><rect x="22" y="6" width="2.05" height="2.05" fill="#f05858"/><rect x="24" y="6" width="2.05" height="2.05" fill="#484880"/><rect x="6" y="8" width="2.05" height="2.05" fill="#484880"/><rect x="8" y="8" width="2.05" height="2.05" fill="#484880"/><rect x="10" y="8" width="2.05" height="2.05" fill="#888898"/><rect x="12" y="8" width="2.05" height="2.05" fill="#c08080"/><rect x="14" y="8" width="2.05" height="2.05" fill="#888898"/><rect x="16" y="8" width="2.05" height="2.05" fill="#484880"/><rect x="20" y="8" width="2.05" height="2.05" fill="#f05858"/><rect x="22" y="8" width="2.05" height="2.05" fill="#f05858"/><rect x="24" y="8" width="2.05" height="2.05" fill="#c08080"/><rect x="8" y="10" width="2.05" height="2.05" fill="#888898"/><rect x="10" y="10" width="2.05" height="2.05" fill="#ffffff"/><rect x="12" y="10" width="2.05" height="2.05" fill="#ffffff"/><rect x="14" y="10" width="2.05" height="2.05" fill="#ffffff"/><rect x="16" y="10" width="2.05" height="2.05" fill="#ffffff"/><rect x="18" y="10" width="2.05" height="2.05" fill="#c08080"/><rect x="20" y="10" width="2.05" height="2.05" fill="#c08080"/><rect x="22" y="10" width="2.05" height="2.05" fill="#404048"/><rect x="4" y="12" width="2.05" height="2.05" fill="#e8e0e8"/><rect x="6" y="12" width="2.05" height="2.05" fill="#888898"/><rect x="8" y="12" width="2.05" height="2.05" fill="#c08080"/><rect x="10" y="12" width="2.05" height="2.05" fill="#e8e0e8"/><rect x="12" y="12" width="2.05" height="2.05" fill="#ffffff"/><rect x="14" y="12" width="2.05" height="2.05" fill="#ffffff"/><rect x="16" y="12" width="2.05" height="2.05" fill="#c08080"/><rect x="18" y="12" width="2.05" height="2.05" fill="#888898"/><rect x="20" y="12" width="2.05" height="2.05" fill="#404048"/><rect x="24" y="12" width="2.05" height="2.05" fill="#1010a0"/><rect x="26" y="12" width="2.05" height="2.05" fill="#484880"/><rect x="0" y="14" width="2.05" height="2.05" fill="#e81818"/><rect x="2" y="14" width="2.05" height="2.05" fill="#e81818"/><rect x="4" y="14" width="2.05" height="2.05" fill="#e81818"/><rect x="6" y="14" width="2.05" height="2.05" fill="#e81818"/><rect x="8" y="14" width="2.05" height="2.05" fill="#e81818"/><rect x="10" y="14" width="2.05" height="2.05" fill="#e81818"/><rect x="12" y="14" width="2.05" height="2.05" fill="#ffffff"/><rect x="14" y="14" width="2.05" height="2.05" fill="#ffffff"/><rect x="16" y="14" width="2.05" height="2.05" fill="#c08080"/><rect x="18" y="14" width="2.05" height="2.05" fill="#e81818"/><rect x="20" y="14" width="2.05" height="2.05" fill="#e81818"/><rect x="22" y="14" width="2.05" height="2.05" fill="#e81818"/><rect x="24" y="14" width="2.05" height="2.05" fill="#e81818"/><rect x="26" y="14" width="2.05" height="2.05" fill="#e81818"/><rect x="28" y="14" width="2.05" height="2.05" fill="#404048"/><rect x="30" y="14" width="2.05" height="2.05" fill="#404048"/><rect x="2" y="16" width="2.05" height="2.05" fill="#902828"/><rect x="4" y="16" width="2.05" height="2.05" fill="#902828"/><rect x="6" y="16" width="2.05" height="2.05" fill="#902828"/><rect x="8" y="16" width="2.05" height="2.05" fill="#902828"/><rect x="10" y="16" width="2.05" height="2.05" fill="#c08080"/><rect x="12" y="16" width="2.05" height="2.05" fill="#ffffff"/><rect x="14" y="16" width="2.05" height="2.05" fill="#ffffff"/><rect x="16" y="16" width="2.05" height="2.05" fill="#c08080"/><rect x="18" y="16" width="2.05" height="2.05" fill="#c08080"/><rect x="20" y="16" width="2.05" height="2.05" fill="#c08080"/><rect x="22" y="16" width="2.05" height="2.05" fill="#902828"/><rect x="24" y="16" width="2.05" height="2.05" fill="#e81818"/><rect x="26" y="16" width="2.05" height="2.05" fill="#e81818"/><rect x="8" y="18" width="2.05" height="2.05" fill="#888898"/><rect x="10" y="18" width="2.05" height="2.05" fill="#c08080"/><rect x="12" y="18" width="2.05" height="2.05" fill="#e8e0e8"/><rect x="14" y="18" width="2.05" height="2.05" fill="#ffffff"/><rect x="16" y="18" width="2.05" height="2.05" fill="#c08080"/><rect x="18" y="18" width="2.05" height="2.05" fill="#888898"/><rect x="20" y="18" width="2.05" height="2.05" fill="#888898"/><rect x="4" y="20" width="2.05" height="2.05" fill="#c08080"/><rect x="6" y="20" width="2.05" height="2.05" fill="#c08080"/><rect x="8" y="20" width="2.05" height="2.05" fill="#e81818"/><rect x="10" y="20" width="2.05" height="2.05" fill="#902828"/><rect x="12" y="20" width="2.05" height="2.05" fill="#c08080"/><rect x="14" y="20" width="2.05" height="2.05" fill="#e8e0e8"/><rect x="16" y="20" width="2.05" height="2.05" fill="#c08080"/><rect x="18" y="20" width="2.05" height="2.05" fill="#888898"/><rect x="20" y="20" width="2.05" height="2.05" fill="#484880"/><rect x="22" y="20" width="2.05" height="2.05" fill="#484880"/><rect x="4" y="22" width="2.05" height="2.05" fill="#c08080"/><rect x="6" y="22" width="2.05" height="2.05" fill="#f05858"/><rect x="8" y="22" width="2.05" height="2.05" fill="#902828"/><rect x="12" y="22" width="2.05" height="2.05" fill="#484880"/><rect x="14" y="22" width="2.05" height="2.05" fill="#484880"/><rect x="16" y="22" width="2.05" height="2.05" fill="#c08080"/><rect x="18" y="22" width="2.05" height="2.05" fill="#484880"/><rect x="20" y="22" width="2.05" height="2.05" fill="#1010a0"/><rect x="22" y="22" width="2.05" height="2.05" fill="#1010a0"/><rect x="24" y="22" width="2.05" height="2.05" fill="#484880"/><rect x="4" y="24" width="2.05" height="2.05" fill="#902828"/><rect x="6" y="24" width="2.05" height="2.05" fill="#f05858"/><rect x="8" y="24" width="2.05" height="2.05" fill="#c08080"/><rect x="12" y="24" width="2.05" height="2.05" fill="#484880"/><rect x="14" y="24" width="2.05" height="2.05" fill="#000068"/><rect x="16" y="24" width="2.05" height="2.05" fill="#484880"/><rect x="20" y="24" width="2.05" height="2.05" fill="#1010a0"/><rect x="22" y="24" width="2.05" height="2.05" fill="#1010a0"/><rect x="24" y="24" width="2.05" height="2.05" fill="#1010a0"/><rect x="4" y="26" width="2.05" height="2.05" fill="#902828"/><rect x="6" y="26" width="2.05" height="2.05" fill="#902828"/><rect x="12" y="26" width="2.05" height="2.05" fill="#484880"/><rect x="14" y="26" width="2.05" height="2.05" fill="#000068"/><rect x="16" y="26" width="2.05" height="2.05" fill="#484880"/><rect x="22" y="26" width="2.05" height="2.05" fill="#484880"/><rect x="24" y="26" width="2.05" height="2.05" fill="#484880"/><rect x="14" y="28" width="2.05" height="2.05" fill="#000068"/><rect x="16" y="28" width="2.05" height="2.05" fill="#484880"/><rect x="14" y="30" width="2.05" height="2.05" fill="#404048"/><rect x="16" y="30" width="2.05" height="2.05" fill="#404048"/></g></svg>
<svg style="left:68px;top:821.5px;opacity:0.92" width="32" height="32" viewBox="0 0 32 32"><filter id="fb3" x="-10%" y="-10%" width="120%" height="120%"><feGaussianBlur stdDeviation="0.8"/></filter><g filter="url(#fb3)"><rect x="12" y="0" width="2.05" height="2.05" fill="#404048"/><rect x="14" y="0" width="2.05" height="2.05" fill="#ffffff"/><rect x="16" y="0" width="2.05" height="2.05" fill="#404048"/><rect x="12" y="2" width="2.05" height="2.05" fill="#404048"/><rect x="14" y="2" width="2.05" height="2.05" fill="#c8c8e0"/><rect x="16" y="2" width="2.05" height="2.05" fill="#404048"/><rect x="4" y="4" width="2.05" height="2.05" fill="#484880"/><rect x="6" y="4" width="2.05" height="2.05" fill="#484880"/><rect x="12" y="4" width="2.05" height="2.05" fill="#c08080"/><rect x="14" y="4" width="2.05" height="2.05" fill="#484880"/><rect x="16" y="4" width="2.05" height="2.05" fill="#000068"/><rect x="22" y="4" width="2.05" height="2.05" fill="#484880"/><rect x="24" y="4" width="2.05" height="2.05" fill="#484880"/><rect x="4" y="6" width="2.05" height="2.05" fill="#484880"/><rect x="6" y="6" width="2.05" height="2.05" fill="#000068"/><rect x="8" y="6" width="2.05" height="2.05" fill="#484880"/><rect x="12" y="6" width="2.05" height="2.05" fill="#c08080"/><rect x="14" y="6" width="2.05" height="2.05" fill="#888898"/><rect x="16" y="6" width="2.05" height="2.05" fill="#000068"/><rect x="22" y="6" width="2.05" height="2.05" fill="#f05858"/><rect x="24" y="6" width="2.05" height="2.05" fill="#484880"/><rect x="6" y="8" width="2.05" height="2.05" fill="#484880"/><rect x="8" y="8" width="2.05" height="2.05" fill="#484880"/><rect x="10" y="8" width="2.05" height="2.05" fill="#888898"/><rect x="12" y="8" width="2.05" height="2.05" fill="#c08080"/><rect x="14" y="8" width="2.05" height="2.05" fill="#888898"/><rect x="16" y="8" width="2.05" height="2.05" fill="#484880"/><rect x="20" y="8" width="2.05" height="2.05" fill="#f05858"/><rect x="22" y="8" width="2.05" height="2.05" fill="#f05858"/><rect x="24" y="8" width="2.05" height="2.05" fill="#c08080"/><rect x="8" y="10" width="2.05" height="2.05" fill="#888898"/><rect x="10" y="10" width="2.05" height="2.05" fill="#ffffff"/><rect x="12" y="10" width="2.05" height="2.05" fill="#ffffff"/><rect x="14" y="10" width="2.05" height="2.05" fill="#ffffff"/><rect x="16" y="10" width="2.05" height="2.05" fill="#ffffff"/><rect x="18" y="10" width="2.05" height="2.05" fill="#c08080"/><rect x="20" y="10" width="2.05" height="2.05" fill="#c08080"/><rect x="22" y="10" width="2.05" height="2.05" fill="#404048"/><rect x="4" y="12" width="2.05" height="2.05" fill="#e8e0e8"/><rect x="6" y="12" width="2.05" height="2.05" fill="#888898"/><rect x="8" y="12" width="2.05" height="2.05" fill="#c08080"/><rect x="10" y="12" width="2.05" height="2.05" fill="#e8e0e8"/><rect x="12" y="12" width="2.05" height="2.05" fill="#ffffff"/><rect x="14" y="12" width="2.05" height="2.05" fill="#ffffff"/><rect x="16" y="12" width="2.05" height="2.05" fill="#c08080"/><rect x="18" y="12" width="2.05" height="2.05" fill="#888898"/><rect x="20" y="12" width="2.05" height="2.05" fill="#404048"/><rect x="24" y="12" width="2.05" height="2.05" fill="#1010a0"/><rect x="26" y="12" width="2.05" height="2.05" fill="#484880"/><rect x="0" y="14" width="2.05" height="2.05" fill="#e81818"/><rect x="2" y="14" width="2.05" height="2.05" fill="#e81818"/><rect x="4" y="14" width="2.05" height="2.05" fill="#e81818"/><rect x="6" y="14" width="2.05" height="2.05" fill="#e81818"/><rect x="8" y="14" width="2.05" height="2.05" fill="#e81818"/><rect x="10" y="14" width="2.05" height="2.05" fill="#e81818"/><rect x="12" y="14" width="2.05" height="2.05" fill="#ffffff"/><rect x="14" y="14" width="2.05" height="2.05" fill="#ffffff"/><rect x="16" y="14" width="2.05" height="2.05" fill="#c08080"/><rect x="18" y="14" width="2.05" height="2.05" fill="#e81818"/><rect x="20" y="14" width="2.05" height="2.05" fill="#e81818"/><rect x="22" y="14" width="2.05" height="2.05" fill="#e81818"/><rect x="24" y="14" width="2.05" height="2.05" fill="#e81818"/><rect x="26" y="14" width="2.05" height="2.05" fill="#e81818"/><rect x="28" y="14" width="2.05" height="2.05" fill="#404048"/><rect x="30" y="14" width="2.05" height="2.05" fill="#404048"/><rect x="2" y="16" width="2.05" height="2.05" fill="#902828"/><rect x="4" y="16" width="2.05" height="2.05" fill="#902828"/><rect x="6" y="16" width="2.05" height="2.05" fill="#902828"/><rect x="8" y="16" width="2.05" height="2.05" fill="#902828"/><rect x="10" y="16" width="2.05" height="2.05" fill="#c08080"/><rect x="12" y="16" width="2.05" height="2.05" fill="#ffffff"/><rect x="14" y="16" width="2.05" height="2.05" fill="#ffffff"/><rect x="16" y="16" width="2.05" height="2.05" fill="#c08080"/><rect x="18" y="16" width="2.05" height="2.05" fill="#c08080"/><rect x="20" y="16" width="2.05" height="2.05" fill="#c08080"/><rect x="22" y="16" width="2.05" height="2.05" fill="#902828"/><rect x="24" y="16" width="2.05" height="2.05" fill="#e81818"/><rect x="26" y="16" width="2.05" height="2.05" fill="#e81818"/><rect x="8" y="18" width="2.05" height="2.05" fill="#888898"/><rect x="10" y="18" width="2.05" height="2.05" fill="#c08080"/><rect x="12" y="18" width="2.05" height="2.05" fill="#e8e0e8"/><rect x="14" y="18" width="2.05" height="2.05" fill="#ffffff"/><rect x="16" y="18" width="2.05" height="2.05" fill="#c08080"/><rect x="18" y="18" width="2.05" height="2.05" fill="#888898"/><rect x="20" y="18" width="2.05" height="2.05" fill="#888898"/><rect x="4" y="20" width="2.05" height="2.05" fill="#c08080"/><rect x="6" y="20" width="2.05" height="2.05" fill="#c08080"/><rect x="8" y="20" width="2.05" height="2.05" fill="#e81818"/><rect x="10" y="20" width="2.05" height="2.05" fill="#902828"/><rect x="12" y="20" width="2.05" height="2.05" fill="#c08080"/><rect x="14" y="20" width="2.05" height="2.05" fill="#e8e0e8"/><rect x="16" y="20" width="2.05" height="2.05" fill="#c08080"/><rect x="18" y="20" width="2.05" height="2.05" fill="#888898"/><rect x="20" y="20" width="2.05" height="2.05" fill="#484880"/><rect x="22" y="20" width="2.05" height="2.05" fill="#484880"/><rect x="4" y="22" width="2.05" height="2.05" fill="#c08080"/><rect x="6" y="22" width="2.05" height="2.05" fill="#f05858"/><rect x="8" y="22" width="2.05" height="2.05" fill="#902828"/><rect x="12" y="22" width="2.05" height="2.05" fill="#484880"/><rect x="14" y="22" width="2.05" height="2.05" fill="#484880"/><rect x="16" y="22" width="2.05" height="2.05" fill="#c08080"/><rect x="18" y="22" width="2.05" height="2.05" fill="#484880"/><rect x="20" y="22" width="2.05" height="2.05" fill="#1010a0"/><rect x="22" y="22" width="2.05" height="2.05" fill="#1010a0"/><rect x="24" y="22" width="2.05" height="2.05" fill="#484880"/><rect x="4" y="24" width="2.05" height="2.05" fill="#902828"/><rect x="6" y="24" width="2.05" height="2.05" fill="#f05858"/><rect x="8" y="24" width="2.05" height="2.05" fill="#c08080"/><rect x="12" y="24" width="2.05" height="2.05" fill="#484880"/><rect x="14" y="24" width="2.05" height="2.05" fill="#000068"/><rect x="16" y="24" width="2.05" height="2.05" fill="#484880"/><rect x="20" y="24" width="2.05" height="2.05" fill="#1010a0"/><rect x="22" y="24" width="2.05" height="2.05" fill="#1010a0"/><rect x="24" y="24" width="2.05" height="2.05" fill="#1010a0"/><rect x="4" y="26" width="2.05" height="2.05" fill="#902828"/><rect x="6" y="26" width="2.05" height="2.05" fill="#902828"/><rect x="12" y="26" width="2.05" height="2.05" fill="#484880"/><rect x="14" y="26" width="2.05" height="2.05" fill="#000068"/><rect x="16" y="26" width="2.05" height="2.05" fill="#484880"/><rect x="22" y="26" width="2.05" height="2.05" fill="#484880"/><rect x="24" y="26" width="2.05" height="2.05" fill="#484880"/><rect x="14" y="28" width="2.05" height="2.05" fill="#000068"/><rect x="16" y="28" width="2.05" height="2.05" fill="#484880"/><rect x="14" y="30" width="2.05" height="2.05" fill="#404048"/><rect x="16" y="30" width="2.05" height="2.05" fill="#404048"/></g><g opacity="0.45"><rect x="12" y="0" width="2.05" height="2.05" fill="#404048"/><rect x="14" y="0" width="2.05" height="2.05" fill="#ffffff"/><rect x="16" y="0" width="2.05" height="2.05" fill="#404048"/><rect x="12" y="2" width="2.05" height="2.05" fill="#404048"/><rect x="14" y="2" width="2.05" height="2.05" fill="#c8c8e0"/><rect x="16" y="2" width="2.05" height="2.05" fill="#404048"/><rect x="4" y="4" width="2.05" height="2.05" fill="#484880"/><rect x="6" y="4" width="2.05" height="2.05" fill="#484880"/><rect x="12" y="4" width="2.05" height="2.05" fill="#c08080"/><rect x="14" y="4" width="2.05" height="2.05" fill="#484880"/><rect x="16" y="4" width="2.05" height="2.05" fill="#000068"/><rect x="22" y="4" width="2.05" height="2.05" fill="#484880"/><rect x="24" y="4" width="2.05" height="2.05" fill="#484880"/><rect x="4" y="6" width="2.05" height="2.05" fill="#484880"/><rect x="6" y="6" width="2.05" height="2.05" fill="#000068"/><rect x="8" y="6" width="2.05" height="2.05" fill="#484880"/><rect x="12" y="6" width="2.05" height="2.05" fill="#c08080"/><rect x="14" y="6" width="2.05" height="2.05" fill="#888898"/><rect x="16" y="6" width="2.05" height="2.05" fill="#000068"/><rect x="22" y="6" width="2.05" height="2.05" fill="#f05858"/><rect x="24" y="6" width="2.05" height="2.05" fill="#484880"/><rect x="6" y="8" width="2.05" height="2.05" fill="#484880"/><rect x="8" y="8" width="2.05" height="2.05" fill="#484880"/><rect x="10" y="8" width="2.05" height="2.05" fill="#888898"/><rect x="12" y="8" width="2.05" height="2.05" fill="#c08080"/><rect x="14" y="8" width="2.05" height="2.05" fill="#888898"/><rect x="16" y="8" width="2.05" height="2.05" fill="#484880"/><rect x="20" y="8" width="2.05" height="2.05" fill="#f05858"/><rect x="22" y="8" width="2.05" height="2.05" fill="#f05858"/><rect x="24" y="8" width="2.05" height="2.05" fill="#c08080"/><rect x="8" y="10" width="2.05" height="2.05" fill="#888898"/><rect x="10" y="10" width="2.05" height="2.05" fill="#ffffff"/><rect x="12" y="10" width="2.05" height="2.05" fill="#ffffff"/><rect x="14" y="10" width="2.05" height="2.05" fill="#ffffff"/><rect x="16" y="10" width="2.05" height="2.05" fill="#ffffff"/><rect x="18" y="10" width="2.05" height="2.05" fill="#c08080"/><rect x="20" y="10" width="2.05" height="2.05" fill="#c08080"/><rect x="22" y="10" width="2.05" height="2.05" fill="#404048"/><rect x="4" y="12" width="2.05" height="2.05" fill="#e8e0e8"/><rect x="6" y="12" width="2.05" height="2.05" fill="#888898"/><rect x="8" y="12" width="2.05" height="2.05" fill="#c08080"/><rect x="10" y="12" width="2.05" height="2.05" fill="#e8e0e8"/><rect x="12" y="12" width="2.05" height="2.05" fill="#ffffff"/><rect x="14" y="12" width="2.05" height="2.05" fill="#ffffff"/><rect x="16" y="12" width="2.05" height="2.05" fill="#c08080"/><rect x="18" y="12" width="2.05" height="2.05" fill="#888898"/><rect x="20" y="12" width="2.05" height="2.05" fill="#404048"/><rect x="24" y="12" width="2.05" height="2.05" fill="#1010a0"/><rect x="26" y="12" width="2.05" height="2.05" fill="#484880"/><rect x="0" y="14" width="2.05" height="2.05" fill="#e81818"/><rect x="2" y="14" width="2.05" height="2.05" fill="#e81818"/><rect x="4" y="14" width="2.05" height="2.05" fill="#e81818"/><rect x="6" y="14" width="2.05" height="2.05" fill="#e81818"/><rect x="8" y="14" width="2.05" height="2.05" fill="#e81818"/><rect x="10" y="14" width="2.05" height="2.05" fill="#e81818"/><rect x="12" y="14" width="2.05" height="2.05" fill="#ffffff"/><rect x="14" y="14" width="2.05" height="2.05" fill="#ffffff"/><rect x="16" y="14" width="2.05" height="2.05" fill="#c08080"/><rect x="18" y="14" width="2.05" height="2.05" fill="#e81818"/><rect x="20" y="14" width="2.05" height="2.05" fill="#e81818"/><rect x="22" y="14" width="2.05" height="2.05" fill="#e81818"/><rect x="24" y="14" width="2.05" height="2.05" fill="#e81818"/><rect x="26" y="14" width="2.05" height="2.05" fill="#e81818"/><rect x="28" y="14" width="2.05" height="2.05" fill="#404048"/><rect x="30" y="14" width="2.05" height="2.05" fill="#404048"/><rect x="2" y="16" width="2.05" height="2.05" fill="#902828"/><rect x="4" y="16" width="2.05" height="2.05" fill="#902828"/><rect x="6" y="16" width="2.05" height="2.05" fill="#902828"/><rect x="8" y="16" width="2.05" height="2.05" fill="#902828"/><rect x="10" y="16" width="2.05" height="2.05" fill="#c08080"/><rect x="12" y="16" width="2.05" height="2.05" fill="#ffffff"/><rect x="14" y="16" width="2.05" height="2.05" fill="#ffffff"/><rect x="16" y="16" width="2.05" height="2.05" fill="#c08080"/><rect x="18" y="16" width="2.05" height="2.05" fill="#c08080"/><rect x="20" y="16" width="2.05" height="2.05" fill="#c08080"/><rect x="22" y="16" width="2.05" height="2.05" fill="#902828"/><rect x="24" y="16" width="2.05" height="2.05" fill="#e81818"/><rect x="26" y="16" width="2.05" height="2.05" fill="#e81818"/><rect x="8" y="18" width="2.05" height="2.05" fill="#888898"/><rect x="10" y="18" width="2.05" height="2.05" fill="#c08080"/><rect x="12" y="18" width="2.05" height="2.05" fill="#e8e0e8"/><rect x="14" y="18" width="2.05" height="2.05" fill="#ffffff"/><rect x="16" y="18" width="2.05" height="2.05" fill="#c08080"/><rect x="18" y="18" width="2.05" height="2.05" fill="#888898"/><rect x="20" y="18" width="2.05" height="2.05" fill="#888898"/><rect x="4" y="20" width="2.05" height="2.05" fill="#c08080"/><rect x="6" y="20" width="2.05" height="2.05" fill="#c08080"/><rect x="8" y="20" width="2.05" height="2.05" fill="#e81818"/><rect x="10" y="20" width="2.05" height="2.05" fill="#902828"/><rect x="12" y="20" width="2.05" height="2.05" fill="#c08080"/><rect x="14" y="20" width="2.05" height="2.05" fill="#e8e0e8"/><rect x="16" y="20" width="2.05" height="2.05" fill="#c08080"/><rect x="18" y="20" width="2.05" height="2.05" fill="#888898"/><rect x="20" y="20" width="2.05" height="2.05" fill="#484880"/><rect x="22" y="20" width="2.05" height="2.05" fill="#484880"/><rect x="4" y="22" width="2.05" height="2.05" fill="#c08080"/><rect x="6" y="22" width="2.05" height="2.05" fill="#f05858"/><rect x="8" y="22" width="2.05" height="2.05" fill="#902828"/><rect x="12" y="22" width="2.05" height="2.05" fill="#484880"/><rect x="14" y="22" width="2.05" height="2.05" fill="#484880"/><rect x="16" y="22" width="2.05" height="2.05" fill="#c08080"/><rect x="18" y="22" width="2.05" height="2.05" fill="#484880"/><rect x="20" y="22" width="2.05" height="2.05" fill="#1010a0"/><rect x="22" y="22" width="2.05" height="2.05" fill="#1010a0"/><rect x="24" y="22" width="2.05" height="2.05" fill="#484880"/><rect x="4" y="24" width="2.05" height="2.05" fill="#902828"/><rect x="6" y="24" width="2.05" height="2.05" fill="#f05858"/><rect x="8" y="24" width="2.05" height="2.05" fill="#c08080"/><rect x="12" y="24" width="2.05" height="2.05" fill="#484880"/><rect x="14" y="24" width="2.05" height="2.05" fill="#000068"/><rect x="16" y="24" width="2.05" height="2.05" fill="#484880"/><rect x="20" y="24" width="2.05" height="2.05" fill="#1010a0"/><rect x="22" y="24" width="2.05" height="2.05" fill="#1010a0"/><rect x="24" y="24" width="2.05" height="2.05" fill="#1010a0"/><rect x="4" y="26" width="2.05" height="2.05" fill="#902828"/><rect x="6" y="26" width="2.05" height="2.05" fill="#902828"/><rect x="12" y="26" width="2.05" height="2.05" fill="#484880"/><rect x="14" y="26" width="2.05" height="2.05" fill="#000068"/><rect x="16" y="26" width="2.05" height="2.05" fill="#484880"/><rect x="22" y="26" width="2.05" height="2.05" fill="#484880"/><rect x="24" y="26" width="2.05" height="2.05" fill="#484880"/><rect x="14" y="28" width="2.05" height="2.05" fill="#000068"/><rect x="16" y="28" width="2.05" height="2.05" fill="#484880"/><rect x="14" y="30" width="2.05" height="2.05" fill="#404048"/><rect x="16" y="30" width="2.05" height="2.05" fill="#404048"/></g></svg>
<svg style="left:816.8px;top:180.4px" width="32" height="32" viewBox="-16 -16 32 32"><filter id="fbv" x="-10%" y="-10%" width="120%" height="120%"><feGaussianBlur stdDeviation="0.8"/></filter><g filter="url(#fbv)"><ellipse cx="-8.4" cy="0.7" rx="6.4" ry="2.6" transform="rotate(-4 -8.4 0.7)" fill="#e02424"/><ellipse cx="8.7" cy="0.3" rx="5" ry="2.5" transform="rotate(4 8.7 0.3)" fill="#e02424"/><ellipse cx="7.2" cy="-5.8" rx="4.3" ry="1.9" transform="rotate(-42 7.2 -5.8)" fill="#ee5c5c"/><ellipse cx="-7.2" cy="7.8" rx="5.2" ry="2.2" transform="rotate(-40 -7.2 7.8)" fill="#e23838"/><ellipse cx="-8" cy="-7.6" rx="2.6" ry="1.6" transform="rotate(42 -8 -7.6)" fill="#141470"/><ellipse cx="0.6" cy="-8.8" rx="1.7" ry="2.2" transform="rotate(0 0.6 -8.8)" fill="#202080"/><ellipse cx="11" cy="-2.2" rx="1.6" ry="0.9" transform="rotate(20 11 -2.2)" fill="#5656b4"/><ellipse cx="8.6" cy="8.6" rx="3.4" ry="1.9" transform="rotate(45 8.6 8.6)" fill="#10106c"/><ellipse cx="0" cy="11.6" rx="2" ry="3.6" transform="rotate(0 0 11.6)" fill="#10106c"/><rect x="-3.8" y="-6.4" width="7.4" height="11.6" rx="1.8" fill="#f4f0f2"/><rect x="-5" y="-5.6" width="10" height="3.4" rx="1.2" fill="#ece8ee"/><rect x="-1.6" y="-14.4" width="3.4" height="3.4" rx="0.8" fill="#f0f0f4"/><rect x="0.6" y="-3" width="1.6" height="9" fill="#e0a0a0"/></g><g opacity="0.4"><ellipse cx="-8.4" cy="0.7" rx="6.4" ry="2.6" transform="rotate(-4 -8.4 0.7)" fill="#e02424"/><ellipse cx="8.7" cy="0.3" rx="5" ry="2.5" transform="rotate(4 8.7 0.3)" fill="#e02424"/><ellipse cx="7.2" cy="-5.8" rx="4.3" ry="1.9" transform="rotate(-42 7.2 -5.8)" fill="#ee5c5c"/><ellipse cx="-7.2" cy="7.8" rx="5.2" ry="2.2" transform="rotate(-40 -7.2 7.8)" fill="#e23838"/><ellipse cx="-8" cy="-7.6" rx="2.6" ry="1.6" transform="rotate(42 -8 -7.6)" fill="#141470"/><ellipse cx="0.6" cy="-8.8" rx="1.7" ry="2.2" transform="rotate(0 0.6 -8.8)" fill="#202080"/><ellipse cx="11" cy="-2.2" rx="1.6" ry="0.9" transform="rotate(20 11 -2.2)" fill="#5656b4"/><ellipse cx="8.6" cy="8.6" rx="3.4" ry="1.9" transform="rotate(45 8.6 8.6)" fill="#10106c"/><ellipse cx="0" cy="11.6" rx="2" ry="3.6" transform="rotate(0 0 11.6)" fill="#10106c"/><rect x="-3.8" y="-6.4" width="7.4" height="11.6" rx="1.8" fill="#f4f0f2"/><rect x="-5" y="-5.6" width="10" height="3.4" rx="1.2" fill="#ece8ee"/><rect x="-1.6" y="-14.4" width="3.4" height="3.4" rx="0.8" fill="#f0f0f4"/><rect x="0.6" y="-3" width="1.6" height="9" fill="#e0a0a0"/></g></svg>
<svg style="left:1166px;top:648px;" width="32" height="28" viewBox="0 0 32 28"><rect x="4" y="11.2" width="7.3" height="13.8" fill="#52534c"/><path d="M12.9 14.0C14.6 11.5 15.2 9.0 15.3 6.4C15.4 3.6 20.9 3.0 20.9 7.6L20.9 11.2L25.6 11.2C28.4 11.2 28.6 13.8 27.6 14.8C28.6 16.0 28.4 17.4 27.4 18.2C28.2 19.4 28.0 20.8 27.0 21.6C27.6 23.4 26.6 25.0 24.6 25.0L15.4 25.0C13.8 25.0 12.9 24.2 12.9 23.0Z" fill="#52534c"/></svg>
<svg style="left:1528px;top:650px;" width="32" height="28" viewBox="0 0 32 28"><rect x="4" y="5.1" width="23.9" height="15.4" rx="2" fill="#52534c"/><path d="M17.6 20.0L24.8 25.0L24.8 20.0Z" fill="#52534c"/><rect x="10.1" y="9.6" width="8.3" height="1.5" fill="#141414"/><rect x="10.1" y="13.2" width="12" height="1.6" fill="#141414"/></svg>
<svg style="left:1893px;top:649px;" width="28" height="28" viewBox="0 0 28 28"><circle cx="14" cy="14" r="12.1" fill="#52534c"/><path d="M14.0 8.6L14.0 13.6L17.4 17.2" fill="none" stroke="#141414" stroke-width="2" stroke-linecap="round" stroke-linejoin="round"/></svg>
<svg style="left:2252px;top:646px;" width="36" height="30" viewBox="0 0 36 30"><rect x="3.9" y="6.9" width="21.1" height="16.1" rx="2.4" fill="#52534c"/><path d="M10.7 22.8L14.4 27.0L18.1 22.8Z" fill="#52534c"/><path d="M14.20 11.40Q15.26 14.14 18.00 15.20Q15.26 16.26 14.20 19.00Q13.14 16.26 10.40 15.20Q13.14 14.14 14.20 11.40Z" fill="#101010"/><path d="M25.40 3.60Q26.86 7.34 30.60 8.80Q26.86 10.26 25.40 14.00Q23.94 10.26 20.20 8.80Q23.94 7.34 25.40 3.60Z" fill="#52534c" stroke="#101010" stroke-width="2.6" paint-order="stroke"/></svg>
<svg style="left:862px;top:1554px;" width="36" height="44" viewBox="0 0 36 44"><rect x="5.5" y="5.2" width="25" height="32.3" rx="4" fill="none" stroke="#a8a8a8" stroke-width="3"/><g stroke="#a8a8a8" stroke-width="2.2" stroke-linecap="round"><line x1="12" y1="13" x2="24" y2="13"/><line x1="12" y1="18.3" x2="24" y2="18.3"/><line x1="12" y1="23.6" x2="18" y2="23.6"/></g></svg>
<svg style="left:1018px;top:1550px;" width="42" height="48" viewBox="0 0 42 48"><path d="M14.0 18.0H12Q6.6 18 6.6 23.4V37Q6.6 42.4 12 42.4H29.6Q35 42.4 35 37V23.4Q35 18 29.6 18H27.6" fill="none" stroke="#a8a8a8" stroke-width="3.2" stroke-linecap="round"/><path d="M20.8 28.5V6.5M14.2 12.0L20.8 5.6L27.4 12.0" fill="none" stroke="#a8a8a8" stroke-width="3" stroke-linecap="round" stroke-linejoin="round"/></svg>
<svg style="left:2080px;top:1554px;" width="30" height="44" viewBox="0 0 30 44"><path d="M22.0 8.2L8.0 21.4L22.0 34.7" fill="none" stroke="#4a4a4a" stroke-width="4.2" stroke-linecap="round" stroke-linejoin="round"/></svg>
<svg style="left:2155px;top:1555px;" width="40" height="40" viewBox="0 0 40 40"><circle cx="20" cy="20" r="14" fill="none" stroke="#333333" stroke-width="4"/><line x1="20.3" y1="4.4" x2="20.3" y2="8" stroke="#5a5a5a" stroke-width="1"/></svg>
<svg style="left:2276px;top:1556px;" width="28" height="40" viewBox="0 0 28 40"><path d="M8.0 8.5L19.6 19.7L8.0 31.0" fill="none" stroke="#a8a8a8" stroke-width="4.2" stroke-linecap="round" stroke-linejoin="round"/></svg>
<svg style="left:2310px;top:1595px;" width="50" height="45" viewBox="0 0 50 45"><path d="M12.5 32.3A25 25 0 0 0 37.0 9.5" fill="none" stroke="#fff" stroke-width="7.4" stroke-linecap="round"/></svg>
<svg style="left:200px;top:1145px;" width="400" height="56" viewBox="0 0 400 56"><defs><linearGradient id="gl" x1="0" x2="1"><stop offset="0" stop-color="#7a7a7a" stop-opacity="0"/><stop offset="0.35" stop-color="#7a7a7a" stop-opacity="1"/><stop offset="1" stop-color="#858585"/></linearGradient><linearGradient id="gr" x1="1" x2="0"><stop offset="0" stop-color="#7a7a7a" stop-opacity="0"/><stop offset="0.35" stop-color="#7a7a7a" stop-opacity="1"/><stop offset="1" stop-color="#858585"/></linearGradient></defs><rect x="14" y="18.0" width="160" height="3" fill="url(#gl)"/><rect x="224" y="18.0" width="160" height="3" fill="url(#gr)"/><rect x="14" y="26.7" width="157" height="3" fill="url(#gl)"/><rect x="227" y="26.7" width="157" height="3" fill="url(#gr)"/><rect x="14" y="35.8" width="160" height="3" fill="url(#gl)"/><rect x="224" y="35.8" width="160" height="3" fill="url(#gr)"/><circle cx="199" cy="28" r="23" fill="#989898"/><polygon points="199.00,8.50 203.02,18.30 212.79,14.21 208.70,23.98 218.50,28.00 208.70,32.02 212.79,41.79 203.02,37.70 199.00,47.50 194.98,37.70 185.21,41.79 189.30,32.02 179.50,28.00 189.30,23.98 185.21,14.21 194.98,18.30" fill="#fff"/><circle cx="199" cy="28" r="9.2" fill="#fff" stroke="#989898" stroke-width="1.6"/></svg>
<svg style="left:2150px;top:16px;" width="36" height="30" viewBox="0 0 36 30"><path d="M3.42 11.50A19.8 19.8 0 0 1 32.38 11.50L29.31 14.36A15.6 15.6 0 0 0 6.49 14.36Z" fill="#fff"/><path d="M8.68 16.41A12.6 12.6 0 0 1 27.12 16.41L24.19 19.13A8.6 8.6 0 0 0 11.61 19.13Z" fill="#fff"/><path d="M17.9 26.2L13.5 21.6A6 6 0 0 1 22.3 21.6Z" fill="#fff"/></svg>
<svg style="left:2272px;top:14px;" width="62" height="36" viewBox="0 0 62 36"><rect x="4.4" y="6.3" width="47.2" height="23.2" rx="7.6" fill="none" stroke="#7c7c7c" stroke-width="2.8"/><rect x="6.8" y="8.8" width="42.3" height="18.4" rx="5" fill="#34c759"/><path d="M54.6 13.2Q58.0 15.0 58.0 17.9Q58.0 20.8 54.6 22.6Z" fill="#7c7c7c"/><path d="M30.8 4.6L18.2 19.6L26.4 19.6L23.2 31.2L38.4 15.6L29.6 15.6L32.6 4.6Z" fill="#fff" stroke="#212121" stroke-width="2.4" paint-order="stroke" stroke-linejoin="round"/></svg>
<div id="txt" style="left:0;top:0;width:2360px;height:1640px;will-change:transform">
<span id="s1" style="position:absolute;left:31.80px;top:18.90px;font-size:28px;line-height:1;white-space:nowrap;color:#fff;letter-spacing:-0.143px;-webkit-text-stroke:0.5px #fff;">12:10 AM</span>
<span id="s2" style="position:absolute;left:168.80px;top:18.90px;font-size:28px;line-height:1;white-space:nowrap;color:#fff;letter-spacing:0.889px;-webkit-text-stroke:0.5px #fff;">Mon Mar 30</span>
<span id="s3" style="position:absolute;left:2190.00px;top:18.50px;font-size:28px;line-height:1;white-space:nowrap;color:#fff;letter-spacing:1.333px;-webkit-text-stroke:0.3px #fff;">100%</span>
<span id="nt" style="position:absolute;left:1087.20px;top:92.81px;font-size:32px;line-height:1;white-space:nowrap;color:#b4b4b4;letter-spacing:1.080px;transform:scaleY(1.03);transform-origin:0 84.65%;text-shadow:0 1.5px 0 #0c0c0c;">All Site Stories</span>
<span id="tb1" style="position:absolute;left:48.00px;top:198.89px;font-size:19.5px;line-height:1;white-space:nowrap;color:#b0b0b0;letter-spacing:0.314px;-webkit-text-stroke:0.3px #b0b0b0;">UNREAD · OLDEST</span>
<span id="tb2" style="position:absolute;left:375.60px;top:198.89px;font-size:19.5px;line-height:1;white-space:nowrap;color:#b0b0b0;letter-spacing:0.520px;-webkit-text-stroke:0.3px #b0b0b0;">SEARCH</span>
<span id="c1f" style="position:absolute;left:121.20px;top:268.20px;font-size:28px;line-height:1;white-space:nowrap;color:#7e7e7e;letter-spacing:-0.211px;transform:scaleY(1.07);transform-origin:0 84.65%;">TV Chaos UK RSS Feed</span>
<span id="c1c" style="position:absolute;left:72.40px;top:395.87px;font-size:26.5px;line-height:1;white-space:nowrap;color:#6c6c6c;letter-spacing:0.620px;">Drama / SD / 4.15 GiB</span>
<span id="c1d" style="position:absolute;left:73.10px;top:452.78px;font-size:22px;line-height:1;white-space:nowrap;color:#7a7a7a;letter-spacing:0.310px;-webkit-text-stroke:0.3px #7a7a7a;">Yesterday at 10:12&#8201;PM · Uploaded By TEB1830</span>
<span id="c2f" style="position:absolute;left:117.20px;top:532.40px;font-size:28px;line-height:1;white-space:nowrap;color:#8a8a8a;letter-spacing:-0.126px;transform:scaleY(1.07);transform-origin:0 84.65%;">TV Chaos UK RSS Feed</span>
<span id="c2c" style="position:absolute;left:69.00px;top:677.57px;font-size:26.5px;line-height:1;white-space:nowrap;color:#8e8e8e;letter-spacing:0.840px;">Radio / Radio / 190.03 MiB</span>
<span id="c2d" style="position:absolute;left:68.90px;top:746.68px;font-size:22px;line-height:1;white-space:nowrap;color:#c0c0c0;letter-spacing:0.613px;-webkit-text-stroke:0.2px #c0c0c0;">Yesterday at 10:21&#8201;PM · Uploaded By CMOTDibbler</span>
<span id="c3f" style="position:absolute;left:117.20px;top:824.40px;font-size:28px;line-height:1;white-space:nowrap;color:#8a8a8a;letter-spacing:-0.126px;transform:scaleY(1.07);transform-origin:0 84.65%;">TV Chaos UK RSS Feed</span>
<span id="c3c" style="position:absolute;left:69.00px;top:969.57px;font-size:26.5px;line-height:1;white-space:nowrap;color:#8e8e8e;letter-spacing:0.936px;">Radio / Radio / 328.83 MiB</span>
<span id="c3d" style="position:absolute;left:68.90px;top:1038.68px;font-size:22px;line-height:1;white-space:nowrap;color:#c0c0c0;letter-spacing:0.700px;-webkit-text-stroke:0.2px #c0c0c0;">Yesterday at 10:22&#8201;PM · Uploaded By CMOTDibbler</span>
<span id="rf" style="position:absolute;left:866.70px;top:185.67px;font-size:25.2px;line-height:1;white-space:nowrap;color:#fff;letter-spacing:0.326px;text-shadow:0 1px 0 rgba(0,0,0,.35);">TV Chaos UK RSS Feed</span>
<span id="rd" style="position:absolute;left:862.20px;top:331.52px;font-size:21.6px;line-height:1;white-space:nowrap;color:#7d8072;letter-spacing:-0.020px;transform:scaleY(1.08);transform-origin:0 84.65%;">Yesterday at 10:12&#8201;PM</span>
<span id="rdot" style="position:absolute;left:1092.50px;top:331.38px;font-size:22px;line-height:1;white-space:nowrap;color:#7d8072;letter-spacing:0.000px;font-weight:bold;">·</span>
<span id="ra" style="position:absolute;left:1115.60px;top:330.77px;font-size:22.6px;line-height:1;white-space:nowrap;color:#9a9d8e;letter-spacing:0.533px;-webkit-text-stroke:0.6px #9a9d8e;">Uploaded By TEB1830</span>
<span id="rb" style="position:absolute;left:862.60px;top:445.34px;font-size:27px;line-height:1;white-space:nowrap;color:#c2c2c2;letter-spacing:0.360px;transform:scaleY(1.06);transform-origin:0 84.65%;">Drama / SD / 4.15 GiB</span>
<span id="b1" style="position:absolute;left:989.00px;top:652.68px;font-size:22px;line-height:1;white-space:nowrap;color:#8e8e8e;letter-spacing:1.000px;-webkit-text-stroke:0.4px #8e8e8e;">Train</span>
<span id="b2" style="position:absolute;left:1345.80px;top:652.68px;font-size:22px;line-height:1;white-space:nowrap;color:#8e8e8e;letter-spacing:1.100px;-webkit-text-stroke:0.4px #8e8e8e;">Share</span>
<span id="b3" style="position:absolute;left:1714.00px;top:652.68px;font-size:22px;line-height:1;white-space:nowrap;color:#8e8e8e;letter-spacing:0.667px;-webkit-text-stroke:0.4px #8e8e8e;">Save</span>
<span id="b4" style="position:absolute;left:2068.50px;top:652.68px;font-size:22px;line-height:1;white-space:nowrap;color:#8e8e8e;letter-spacing:1.360px;-webkit-text-stroke:0.4px #8e8e8e;">Ask AI</span>
<span id="bt" style="position:absolute;left:911.00px;top:1561.79px;font-size:26px;line-height:1;white-space:nowrap;color:#a8a8a8;letter-spacing:1.200px;">Text</span>
<span id="bn" style="position:absolute;left:2206.20px;top:1561.99px;font-size:26px;line-height:1;white-space:nowrap;color:#a8a8a8;letter-spacing:1.933px;">Next</span>
<span id="c1t1" style="position:absolute;left:72.70px;top:332.56px;font-size:31px;line-height:1;white-space:nowrap;color:#aeaeae;letter-spacing:0.171px;-webkit-text-stroke:0.3px #aeaeae;">Ben Hall (1975)</span>
<span id="c1t2" style="position:absolute;left:300.00px;top:332.56px;font-size:31px;line-height:1;white-space:nowrap;color:#aeaeae;letter-spacing:3.156px;-webkit-text-stroke:0.3px #aeaeae;">[AU] [mkv]</span>
<span id="c2t1" style="position:absolute;left:68.00px;top:605.26px;font-size:31px;line-height:1;white-space:nowrap;color:#dbdbdb;letter-spacing:0.924px;-webkit-text-stroke:0.3px #dbdbdb;">Pick of the Week March</span>
<span id="c2t2" style="position:absolute;left:422.20px;top:605.26px;font-size:31px;line-height:1;white-space:nowrap;color:#dbdbdb;letter-spacing:2.520px;-webkit-text-stroke:0.3px #dbdbdb;">(2026)</span>
<span id="c2t3" style="position:absolute;left:532.70px;top:605.26px;font-size:31px;line-height:1;white-space:nowrap;color:#dbdbdb;letter-spacing:3.650px;-webkit-text-stroke:0.3px #dbdbdb;">[mp3]</span>
<span id="c3t1" style="position:absolute;left:69.00px;top:897.26px;font-size:31px;line-height:1;white-space:nowrap;color:#dbdbdb;letter-spacing:0.962px;-webkit-text-stroke:0.3px #dbdbdb;">Counterpoint series 39</span>
<span id="c3t2" style="position:absolute;left:410.70px;top:897.26px;font-size:31px;line-height:1;white-space:nowrap;color:#dbdbdb;letter-spacing:2.240px;-webkit-text-stroke:0.3px #dbdbdb;">(2026)</span>
<span id="c3t3" style="position:absolute;left:520.50px;top:897.26px;font-size:31px;line-height:1;white-space:nowrap;color:#dbdbdb;letter-spacing:4.000px;-webkit-text-stroke:0.3px #dbdbdb;">[mp3]</span>
<span id="rt1" style="position:absolute;left:862.80px;top:258.57px;font-size:33px;line-height:1;white-space:nowrap;color:#d6d6d6;letter-spacing:-0.071px;transform:scaleY(1.04);transform-origin:0 84.65%;">Ben Hall (1975)</span>
<span id="rt2" style="position:absolute;left:1101.10px;top:258.57px;font-size:33px;line-height:1;white-space:nowrap;color:#d6d6d6;letter-spacing:2.400px;transform:scaleY(1.04);transform-origin:0 84.65%;">[AU] [mkv]</span>
</div>
</div></body></html>
